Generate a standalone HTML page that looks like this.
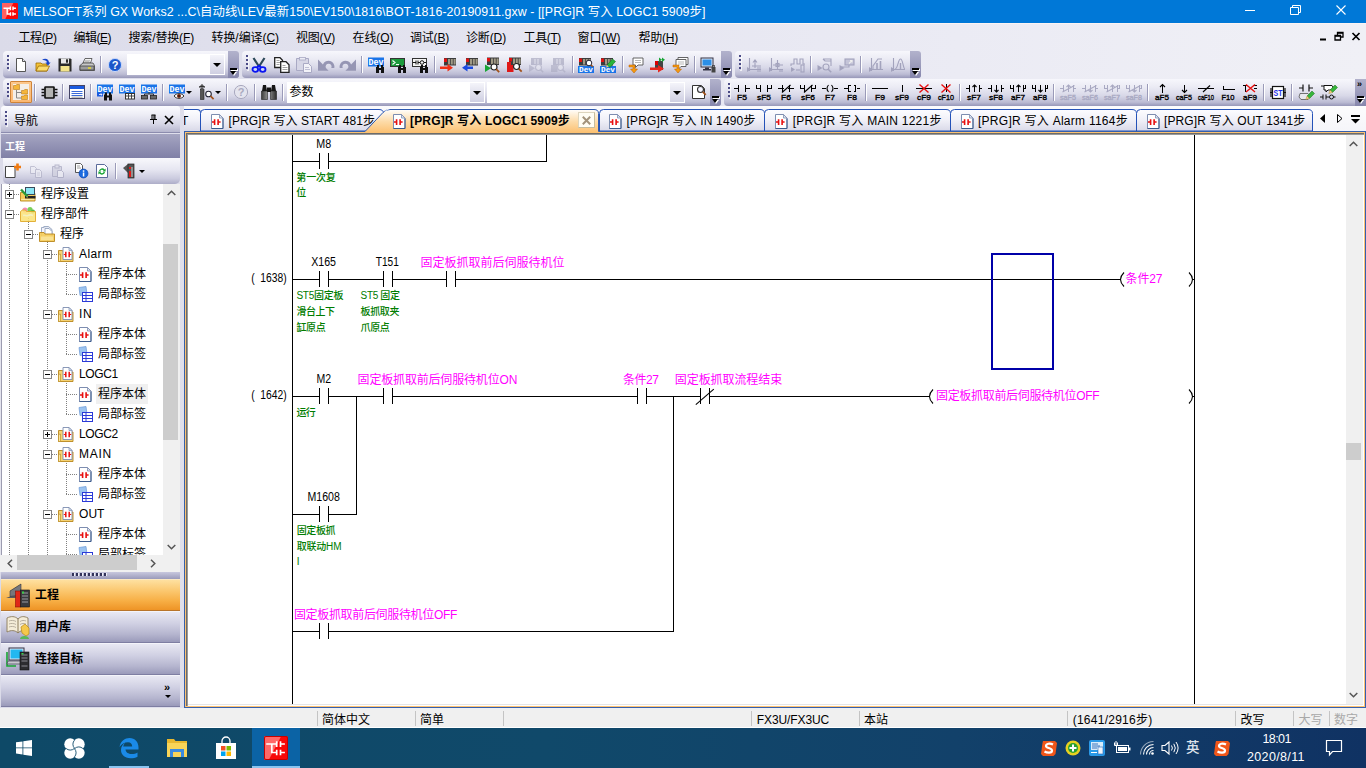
<!DOCTYPE html>
<html lang="zh-CN">
<head>
<meta charset="utf-8">
<title>MELSOFT GX Works2</title>
<style>
*{box-sizing:border-box;margin:0;padding:0}
html,body{width:1366px;height:768px;overflow:hidden;background:linear-gradient(90deg,#dbdbe9 0%,#e4e4f0 35%,#ebebf4 70%,#f0f0f6 100%);font-family:"Liberation Sans","Noto Sans CJK SC",sans-serif;font-size:12px;color:#000}
.abs{position:absolute}
#title{position:absolute;left:0;top:0;width:1366px;height:23px;background:#0078d7;color:#fff}
#title .txt{position:absolute;left:23px;top:0;height:23px;line-height:24px;font-size:12.4px;white-space:nowrap}
#menu{position:absolute;left:0;top:23px;width:1366px;height:28px;border-top:1px solid #fbf3f3}
#menu span{position:absolute;top:0px;height:27px;line-height:28px;font-size:12px;white-space:nowrap}
.tbar{position:absolute;height:27px;border-radius:4px 3px 3px 4px;background:linear-gradient(#f7f7fc 0%,#ebebf4 30%,#d8d8e8 62%,#bcbcd4 86%,#a4a4c2 95%,#9898b8 100%)}
.grip{position:absolute;left:4px;top:4px;width:2px;height:15px;background:repeating-linear-gradient(#4a4a86 0 2px,transparent 2px 4px);box-shadow:1px 1px 0 rgba(255,255,255,.7)}
.tbend{position:absolute;right:0;top:0;width:11px;height:27px;background:linear-gradient(#b2b2cc,#9c9cbc 50%,#8686ac);border-radius:0 3px 3px 0}
.sep{position:absolute;top:5px;width:2px;height:17px;border-left:1px solid #9a9ab8;border-right:1px solid #fff}
.combo{position:absolute;background:#fff;height:21px;top:3px}
.combo .arr{position:absolute;right:1px;top:1px;width:14px;height:19px;background:linear-gradient(#f4f4fa,#cfcfe2)}
.combo .arr:after{content:"";position:absolute;left:3px;top:8px;border:4px solid transparent;border-top:4px solid #000;border-bottom:0}
#status{position:absolute;left:0;top:708px;width:1366px;height:20px;background:#f0f0f0;font-size:12px;border-bottom:1px solid #fff}
#status span{position:absolute;top:3px;height:18px;line-height:18px;white-space:nowrap}
#status i{position:absolute;top:3px;width:1px;height:15px;background:#c4c4c4}
#taskbar{position:absolute;left:0;top:728px;width:1366px;height:40px;background:linear-gradient(90deg,#0e4967 0%,#10496a 40%,#12416a 70%,#103263 100%)}

.ic{position:absolute;width:16px;height:17px;line-height:0}
.ic svg{display:block;overflow:visible}
.dd{position:absolute;top:12px;width:0;height:0;border-style:solid;border-width:3px 3px 0 3px;border-color:#000 transparent transparent transparent}
.hot{position:absolute;background:linear-gradient(#fdc88c,#fbb872);border:1px solid #d08438;border-radius:1px}
.combo span{position:absolute;left:2.5px;top:0;line-height:21.500px;font-size:12px}
.tbend:after{content:"";position:absolute;left:2px;top:17px;width:7px;height:2px;background:#000;box-shadow:1px 1px 0 #fff}
.tbend:before{content:"";position:absolute;left:2px;top:20px;border:3.5px solid transparent;border-top:4px solid #000;border-bottom:0;filter:drop-shadow(1px 1px 0 #fff)}
.chev{position:absolute;left:2px;top:-1px;font-size:9px;line-height:12px;font-weight:bold}
#navhdr{position:absolute;left:1px;top:106px;width:179px;height:27px;background:linear-gradient(#fcfcff,#ececf5 35%,#d6d6e6 70%,#b6b6ce);border-radius:3px 3px 0 0;border-bottom:1px solid #8c8cae}
#navhdr span{position:absolute;left:13px;top:1px;line-height:28px;font-size:12px}
#prjhdr{position:absolute;left:1px;top:134px;width:179px;height:24px;background:linear-gradient(#a6a6c2,#9292b4 50%,#8080a6);color:#fff;font-weight:bold;font-size:10px;line-height:25px;padding-left:4px}
#prjtb{position:absolute;left:3px;top:158px;width:177px;height:26px;background:linear-gradient(#f8f8fc,#e6e6f1 45%,#cacade 80%,#adadc8);border-radius:0 0 5px 5px}
#tree{position:absolute;left:0;top:184px;width:163px;height:371px;background:#fff;overflow:hidden;background:linear-gradient(90deg,#e4e4ee 0 1px,#9c9cb0 1px 2px,#fff 2px)}
.bx{position:absolute;width:9px;height:9px;border:1px solid #848484;background:#fff}
.bx .h{position:absolute;left:1px;top:3px;width:5px;height:1px;background:#000}
.bx .v{position:absolute;left:3px;top:1px;width:1px;height:5px;background:#000}
.vl{position:absolute;width:1px;background:repeating-linear-gradient(#808080 0 1px,transparent 1px 2px)}
.hl{position:absolute;height:1px;background:repeating-linear-gradient(90deg,#808080 0 1px,transparent 1px 2px)}
.tl{position:absolute;height:20px;line-height:21px;font-size:12px;padding:0 2px;white-space:nowrap}
.tl.sel{background:#f0f0f0}
#vsb{position:absolute;left:163px;top:184px;width:17px;height:371px;background:#f0f0f0}
#vsb .thumb{position:absolute;left:0;top:60px;width:15px;height:196px;background:#cdcdcd}
#hsb{position:absolute;left:0;top:555px;width:180px;height:17px;background:#f0f0f0}
#hsb .thumb{position:absolute;left:17px;top:0;width:120px;height:15px;background:#cdcdcd}
#split{position:absolute;left:1px;top:572px;width:179px;height:7px;background:linear-gradient(#c8c8de,#9a9aba)}
#split div{position:absolute;left:71px;top:1px;width:36px;height:3px;background:repeating-linear-gradient(90deg,#33335a 0 2px,#f0f0f8 2px 3px,transparent 3px 4px)}
.nbtn{position:absolute;left:1px;width:179px;height:32px;background:linear-gradient(#e8e8f3,#cfcfe2 40%,#b4b4ce 75%,#9a9aba);border-top:1px solid #f4f4fa;border-bottom:1px solid #7e7ea2}
.nbtn.act{background:linear-gradient(#fee0a0,#fbc870 35%,#f7ae44 70%,#ee9426);border-top:1px solid #fbe8c0;border-bottom:1px solid #b8742a}
.nbtn span{position:absolute;left:34px;top:0;line-height:30px;font-size:12px;font-weight:bold}
.chev2{position:absolute;left:163px;top:5px;font-size:11px;line-height:12px;font-weight:bold}
.tt{position:absolute;top:109px;height:24px;line-height:24px;font-size:12px;white-space:nowrap}
.tt.b{font-weight:bold}
#edframe{position:absolute;left:184px;top:131px;width:1182px;height:577px;background:#fff;border:1px solid #3560ae;box-shadow:inset 0 0 0 1px #fdc272,inset 2px 2px 0 0 #6c6c6c,inset 3px 3px 0 0 #9a9a9a,inset -2px -2px 0 0 #fff,inset -3px -3px 0 0 #fff}
#evsb{position:absolute;left:1346px;top:135px;width:17px;height:569px;background:#f0f0f0}
#evsb .thumb{position:absolute;left:0;top:308px;width:15px;height:17px;background:#cdcdcd}
text.dv{font-family:"Liberation Sans",sans-serif;font-size:12px;fill:#000}
text.lb{font-family:"Liberation Sans","Noto Sans CJK SC",sans-serif;font-size:12px;fill:#f0f}
text.cm{font-family:"Liberation Sans","Noto Sans CJK SC",sans-serif;font-size:10px;font-weight:500;fill:#007c00}
text.st{font-family:"Liberation Sans",sans-serif;font-size:12px;fill:#000;white-space:pre}
</style>
</head>
<body>
<div id="title"><svg class="abs" style="left:2px;top:3px" width="16" height="16" viewBox="0 0 24 24"><rect width="24" height="24" rx="1.5" fill="#f80808"/><path d="M0 0H17L5 24H0z" fill="#ff6060"/><path d="M2.2 8H12.700M12.7 5.200v5.700M16.5 5.200v5.700M16.5 8h4.400M7.8 8v8.500h4.900M12.7 13.700v5.600M16.5 13.700v5.600M16.5 16.500h4.4" stroke="#fff" stroke-width="2.2" fill="none"/></svg><div class="txt" style="letter-spacing:0.041px">MELSOFT系列 GX Works2 ...C\自动线\LEV最新150\EV150\1816\BOT-1816-20190911.gxw - [[PRG]R 写入 LOGC1 5909步]</div><svg class="abs" style="left:1236px;top:0" width="130" height="23" viewBox="0 0 130 23"><g stroke="#fff" stroke-width="1" fill="none"><path d="M9 10.500h10"/><path d="M54.5 7.500h8v7h-8zM56.5 7.500v-2h8v7h-2"/><path d="M100.5 5.500l9 9M109.5 5.500l-9 9" stroke-width="1.1"/></g></svg></div>
<div id="menu">
<svg class="abs" style="left:1316px;top:7px" width="48" height="12" viewBox="0 0 48 12"><g stroke="#000" fill="none"><path d="M4 8.500h6" stroke-width="2"/><path d="M19 4.500h5.500v4.500h-5.500zM21.5 4v-2.500h5.500v4.500h-2" stroke-width="1.3"/><path d="M19 4.800h5.500M21.5 1.800h5.5" stroke-width="1.8"/><path d="M36.5 2l7 7M43.5 2l-7 7" stroke-width="1.7"/></g></svg>
<span style="letter-spacing:-0.403px;left:18.5px">工程(<u>P</u>)</span>
<span style="letter-spacing:-0.503px;left:73.5px">编辑(<u>E</u>)</span>
<span style="letter-spacing:-0.148px;left:128.5px">搜索/替换(<u>F</u>)</span>
<span style="letter-spacing:-0.064px;left:211.5px">转换/编译(<u>C</u>)</span>
<span style="letter-spacing:-0.203px;left:296px">视图(<u>V</u>)</span>
<span style="letter-spacing:-0.069px;left:352.5px">在线(<u>O</u>)</span>
<span style="letter-spacing:-0.203px;left:410px">调试(<u>B</u>)</span>
<span style="letter-spacing:-0.134px;left:466px">诊断(<u>D</u>)</span>
<span style="letter-spacing:-0.369px;left:523.5px">工具(<u>T</u>)</span>
<span style="letter-spacing:-0.066px;left:577.5px">窗口(<u>W</u>)</span>
<span style="letter-spacing:-0.234px;left:638.5px">帮助(<u>H</u>)</span>
</div>
<div class="tbar" style="left:3px;top:51px;width:236px"><div class="grip"></div><div class="ic" style="left:10px;top:6px"><svg width="16" height="16" viewBox="0 0 16 16" ><path d="M3.5 1.5h6l3 3v10h-9z" fill="#fff" stroke="#555" stroke-width="1"/><path d="M9.5 1.5v3h3" fill="#e8e8f0" stroke="#555"/></svg></div><div class="ic" style="left:32px;top:6px"><svg width="16" height="16" viewBox="0 0 16 16" ><path d="M1 6h5l1 1h5v7H1z" fill="#f5c33a" stroke="#9a6a00" stroke-width=".8"/><path d="M1 14l2.5-5h11L12 14z" fill="#fbdc6e" stroke="#9a6a00" stroke-width=".8"/><path d="M7 3c3-2.5 7-1 7 2.5h1.6L13 8.6 10.4 5.5H12C12 3.5 9.5 2.6 7 3z" fill="#1845c8"/></svg></div><div class="ic" style="left:54px;top:6px"><svg width="16" height="16" viewBox="0 0 16 16" ><path d="M1.5 1.5h12l1 1v12h-13z" fill="#2a2a2a"/><rect x="4" y="1.5" width="8" height="5" fill="#e9e9e9"/><rect x="9" y="2.3" width="2" height="3.4" fill="#2a2a2a"/><rect x="3.5" y="9" width="9" height="5.5" fill="#f2e38a"/></svg></div><div class="ic" style="left:76px;top:6px"><svg width="16" height="16" viewBox="0 0 16 16" ><path d="M4 6l2-4.5h7L11.5 6z" fill="#fff" stroke="#444" stroke-width=".8"/><path d="M1 8.5l3-2.5h10l1.5 2.5v5H1z" fill="#c9c9c9" stroke="#444" stroke-width=".8"/><rect x="1" y="9" width="14" height="4" fill="#9c9c9c" stroke="#444" stroke-width=".8"/><rect x="9" y="10.3" width="3" height="1.4" fill="#f0e020"/><path d="M6 3.3h5M5.6 4.6h5" stroke="#888" stroke-width=".6"/></svg></div><div class="sep" style="left:97px"></div><div class="ic" style="left:104px;top:6px"><svg width="16" height="16" viewBox="0 0 16 16" ><circle cx="8" cy="8" r="6.6" fill="#2f6fe0" stroke="#c9d6f5" stroke-width="1"/><circle cx="8" cy="8" r="5.4" fill="#1c55c8"/><text x="8" y="12" font-size="11" font-weight="bold" fill="#fff" text-anchor="middle" font-family="Liberation Sans,sans-serif">?</text></svg></div><div class="combo" style="left:124px;width:98px"><div class="arr"></div></div><div class="tbend"></div></div>
<div class="tbar" style="left:242px;top:51px;width:490px"><div class="grip"></div><div class="ic" style="left:9px;top:6px"><svg width="16" height="16" viewBox="0 0 16 16" ><path d="M2.5 1l5.5 8.500M13.5 1L8 9.5" stroke="#2c4858" stroke-width="2.2" fill="none"/><ellipse cx="4.3" cy="12.5" rx="2.8" ry="2.3" fill="#cfd6f8" stroke="#0a14f0" stroke-width="1.8"/><ellipse cx="11.7" cy="12.5" rx="2.8" ry="2.3" fill="#cfd6f8" stroke="#0a14f0" stroke-width="1.8"/><path d="M8 8.500l-2 2M8 8.500l2 2" stroke="#0a14f0" stroke-width="2"/></svg></div><div class="ic" style="left:32px;top:6px"><svg width="16" height="16" viewBox="0 0 16 16" ><path d="M0.7 0.700h5.300l2.5 2.500v7.300h-7.800z" fill="#fff" stroke="#222" stroke-width="1.3"/><path d="M6.7 4.700h5.300l3 3v7.600h-8.300z" fill="#fff" stroke="#222" stroke-width="1.3"/><path d="M2.5 3.500h3M2.5 5.500h3.500M2.5 7.500h3M8.5 8.500h3M8.5 10.500h5M8.5 12.500h5" stroke="#8a8a8a" stroke-width=".8"/></svg></div><div class="ic" style="left:54px;top:6px"><svg width="16" height="16" viewBox="0 0 16 16" ><path d="M0.5 1.500h12v12h-12z" fill="#d6d6e6" stroke="#a9a9c4" stroke-width="1"/><rect x="3.5" y="0.5" width="6" height="2.5" fill="#ececf4" stroke="#a9a9c4" stroke-width=".8"/><path d="M7.5 6.500h5l3 3v6h-8z" fill="#f2f2f8" stroke="#a9a9c4" stroke-width="1"/><path d="M9 10.500h4M9 12.500h5" stroke="#b9b9d0" stroke-width=".9"/></svg></div><div class="ic" style="left:76px;top:6px"><svg width="16" height="16" viewBox="0 0 16 16" ><path d="M0 2.500V13.700H10.600L7.9 11A3 3 0 1 1 13.3 11H16.300A6 6 0 0 0 4.9 7.400Z" fill="#9696b4"/></svg></div><div class="ic" style="left:98px;top:6px"><svg width="16" height="16" viewBox="0 0 16 16" ><path d="M0 2.500V13.700H10.600L7.9 11A3 3 0 1 1 13.3 11H16.300A6 6 0 0 0 4.9 7.400Z" fill="#9696b4" transform="translate(16,0) scale(-1,1)"/></svg></div><div class="sep" style="left:119px"></div><div class="ic" style="left:126px;top:6px"><svg width="16" height="16" viewBox="0 0 16 16" ><rect x="0" y="0.5" width="16" height="9" fill="#1a74e8"/><text x="8" y="8" font-size="9" font-weight="bold" fill="#fff" text-anchor="middle" font-family="Liberation Mono,monospace" textLength="15" lengthAdjust="spacingAndGlyphs">Dev</text><path d="M8 10h3v6h-3zM13 10h3v6h-3zM9 8h2v2h-2zM13 8h2v2h-2zM11 11h2v2h-2z" fill="#111"/></svg></div><div class="ic" style="left:148px;top:6px"><svg width="16" height="16" viewBox="0 0 16 16" ><rect x="0.5" y="1.5" width="14" height="8" fill="#1c9a3c" stroke="#333"/><path d="M2.5 3.500l2.5 2-2.5 2M6 7.500h3" stroke="#fff" stroke-width="1.1" fill="none"/><path d="M8 10h3v6h-3zM13 10h3v6h-3zM9 8h2v2h-2zM13 8h2v2h-2zM11 11h2v2h-2z" fill="#111"/></svg></div><div class="ic" style="left:170px;top:6px"><svg width="16" height="16" viewBox="0 0 16 16" ><rect x="0.5" y="1.5" width="14" height="8" fill="#f4f4f4" stroke="#333"/><path d="M1 5.500h3M4 3.500v4M6 3.500v4M6 5.500h2M12 5.500h2" stroke="#111" stroke-width="1"/><circle cx="10" cy="5.5" r="1.8" fill="none" stroke="#111"/><path d="M8 10h3v6h-3zM13 10h3v6h-3zM9 8h2v2h-2zM13 8h2v2h-2zM11 11h2v2h-2z" fill="#111"/></svg></div><div class="sep" style="left:192px"></div><div class="ic" style="left:198px;top:6px"><svg width="16" height="16" viewBox="0 0 16 16" ><g opacity="1"><rect x="4" y="1" width="12" height="7.5" fill="#3c3c3c"/><rect x="4" y="1.5" width="3" height="3.5" fill="#e01010"/><rect x="8" y="2" width="2" height="5.5" fill="#a09a86"/><rect x="10.8" y="2" width="2" height="5.5" fill="#a09a86"/><rect x="13.6" y="2" width="2" height="5.5" fill="#a09a86"/></g><path d="M0 9.500h7.500V7L13 10.8 7.5 14.600V12H0z" fill="#f03018"/></svg></div><div class="ic" style="left:220px;top:6px"><svg width="16" height="16" viewBox="0 0 16 16" ><g opacity="1"><rect x="4" y="1" width="12" height="7.5" fill="#3c3c3c"/><rect x="4" y="1.5" width="3" height="3.5" fill="#e01010"/><rect x="8" y="2" width="2" height="5.5" fill="#a09a86"/><rect x="10.8" y="2" width="2" height="5.5" fill="#a09a86"/><rect x="13.6" y="2" width="2" height="5.5" fill="#a09a86"/></g><path d="M11 9.500H5.500V7L0 10.8 5.5 14.600V12H11z" fill="#1a4ae0"/></svg></div><div class="ic" style="left:242px;top:6px"><svg width="16" height="16" viewBox="0 0 16 16" ><g opacity="1"><rect x="3" y="0.5" width="12" height="7.5" fill="#3c3c3c"/><rect x="3" y="1.0" width="3" height="3.5" fill="#e01010"/><rect x="7" y="1.5" width="2" height="5.5" fill="#a09a86"/><rect x="9.8" y="1.5" width="2" height="5.5" fill="#a09a86"/><rect x="12.6" y="1.5" width="2" height="5.5" fill="#a09a86"/></g><path d="M1 7.500l6 3.7-6 3.800z" fill="#18a534"/><circle cx="10" cy="10" r="3" fill="#fff" stroke="#222" stroke-width="1.2"/><path d="M12.2 12.2l3 3" stroke="#a0501a" stroke-width="1.8"/></svg></div><div class="ic" style="left:264px;top:6px"><svg width="16" height="16" viewBox="0 0 16 16" ><g opacity="1"><rect x="3" y="0.5" width="12" height="7.5" fill="#3c3c3c"/><rect x="3" y="1.0" width="3" height="3.5" fill="#e01010"/><rect x="7" y="1.5" width="2" height="5.5" fill="#a09a86"/><rect x="9.8" y="1.5" width="2" height="5.5" fill="#a09a86"/><rect x="12.6" y="1.5" width="2" height="5.5" fill="#a09a86"/></g><rect x="1" y="8" width="6.5" height="7" fill="#e01818"/><rect x="1" y="5" width="4" height="3" fill="#e01818"/><circle cx="10.5" cy="9.5" r="3" fill="#fff" stroke="#222" stroke-width="1.2"/><path d="M12.7 11.7l3 3" stroke="#a0501a" stroke-width="1.8"/></svg></div><div class="ic" style="left:286px;top:6px"><svg width="16" height="16" viewBox="0 0 16 16" ><g opacity=".55"><rect x="3" y="1" width="11" height="7" fill="#9a9ab4"/><path d="M7 2v5M10 2v5" stroke="#e0e0ec"/><path d="M1 7.500l6 3.7-6 3.800z" fill="#a6a6bd"/><circle cx="10.5" cy="10.5" r="3" fill="#e8e8f0" stroke="#a6a6bd" stroke-width="1.2"/><path d="M12.7 12.700l2.5 2.5" stroke="#a6a6bd" stroke-width="1.6"/></g></svg></div><div class="ic" style="left:308px;top:6px"><svg width="16" height="16" viewBox="0 0 16 16" ><g opacity=".55"><rect x="3" y="1" width="11" height="7" fill="#9a9ab4"/><path d="M7 2v5M10 2v5" stroke="#e0e0ec"/><rect x="1" y="8" width="6.5" height="7" fill="#a6a6bd"/><circle cx="10.5" cy="10.5" r="3" fill="#e8e8f0" stroke="#a6a6bd" stroke-width="1.2"/><path d="M12.7 12.700l2.5 2.5" stroke="#a6a6bd" stroke-width="1.6"/></g></svg></div><div class="sep" style="left:330px"></div><div class="ic" style="left:336px;top:6px"><svg width="16" height="16" viewBox="0 0 16 16" ><rect x="0" y="9" width="16" height="7" fill="#1a74e8"/><text x="8" y="15.3" font-size="7.5" font-weight="bold" fill="#fff" text-anchor="middle" font-family="Liberation Mono,monospace" textLength="14" lengthAdjust="spacingAndGlyphs">Dev</text><g opacity="1"><rect x="1" y="1" width="12" height="7.5" fill="#3c3c3c"/><rect x="1" y="1.5" width="3" height="3.5" fill="#e01010"/><rect x="5" y="2" width="2" height="5.5" fill="#a09a86"/><rect x="7.8" y="2" width="2" height="5.5" fill="#a09a86"/><rect x="10.6" y="2" width="2" height="5.5" fill="#a09a86"/></g><circle cx="11" cy="6" r="2.8" fill="#fff" stroke="#223" stroke-width="1"/><path d="M13 8l1.8 1.8" stroke="#a0501a" stroke-width="1.6"/></svg></div><div class="ic" style="left:358px;top:6px"><svg width="16" height="16" viewBox="0 0 16 16" ><rect x="0" y="9" width="16" height="7" fill="#1a74e8"/><text x="8" y="15.3" font-size="7.5" font-weight="bold" fill="#fff" text-anchor="middle" font-family="Liberation Mono,monospace" textLength="14" lengthAdjust="spacingAndGlyphs">Dev</text><g opacity="1"><rect x="1" y="1" width="12" height="7.5" fill="#3c3c3c"/><rect x="1" y="1.5" width="3" height="3.5" fill="#e01010"/><rect x="5" y="2" width="2" height="5.5" fill="#a09a86"/><rect x="7.8" y="2" width="2" height="5.5" fill="#a09a86"/><rect x="10.6" y="2" width="2" height="5.5" fill="#a09a86"/></g><path d="M7 8l5.5-6 3 2.5-5.5 6z" fill="#27b43a" stroke="#156a20" stroke-width=".6"/><path d="M7 8l-1 2.6 2.8-.800z" fill="#f0d080"/></svg></div><div class="sep" style="left:380px"></div><div class="ic" style="left:386px;top:6px"><svg width="16" height="16" viewBox="0 0 16 16" ><path d="M5 1h10v7h-5l-2.5 2.500V8H5z" fill="#fff" stroke="#555" stroke-width=".9"/><path d="M7 3.5h6M7 5.5h6" stroke="#999" stroke-width=".7"/><path d="M1 8h6v4h2.500L6 16 2.5 12H5V10H1z" fill="#f59a10" stroke="#b85c00" stroke-width=".5"/></svg></div><div class="ic" style="left:408px;top:6px"><svg width="16" height="16" viewBox="0 0 16 16" ><rect x="5" y="4" width="8" height="9" fill="#444"/><rect x="5" y="4" width="3" height="4" fill="#d00"/><path d="M9 0.500l3 2.2-3 2.200zM12 0.500l3 2.2-3 2.200z" fill="#18a534"/><path d="M0 10.500h8V8l6 3.8-6 3.800v-2.500H0z" fill="#e8261c"/></svg></div><div class="ic" style="left:430px;top:6px"><svg width="16" height="16" viewBox="0 0 16 16" ><path d="M6 0.5h10v7h-5l-2.5 2.500V7.5H6z" fill="#fff" stroke="#555" stroke-width=".9"/><path d="M8 3.0h6M8 5.0h6" stroke="#999" stroke-width=".7"/><path d="M4 2.5h10v7h-5l-2.5 2.500V9.5H4z" fill="#fff" stroke="#555" stroke-width=".9"/><path d="M6 5.0h6M6 7.0h6" stroke="#999" stroke-width=".7"/><path d="M1 8h6v4h2.500L6 16 2.5 12H5V10H1z" fill="#f59a10" stroke="#b85c00" stroke-width=".5"/></svg></div><div class="sep" style="left:452px"></div><div class="ic" style="left:458px;top:6px"><svg width="16" height="16" viewBox="0 0 16 16" ><rect x="1" y="1" width="12" height="9" fill="#dfe8f8" stroke="#334" stroke-width="1"/><rect x="2.5" y="2.5" width="9" height="6" fill="#2b8fe8"/><rect x="5" y="10.5" width="4" height="1.5" fill="#334"/><rect x="3" y="12" width="8" height="1.5" fill="#334"/><rect x="11.5" y="10" width="4" height="5.5" fill="#444"/><rect x="12.5" y="8.5" width="2" height="2" fill="none" stroke="#444" stroke-width=".8"/></svg></div><div class="tbend"></div></div>
<div class="tbar" style="left:735px;top:51px;width:186px"><div class="grip"></div><div class="ic" style="left:11px;top:6px"><svg width="16" height="16" viewBox="0 0 16 16" ><g fill="none" stroke="#a3a3bd" stroke-width="1.1"><path d="M3.5 1v13M1 12.500h14M6 9h9M9 3v8M7 5.500l2-2.5 2 2.5"/><path d="M1 10l4 2.5-4 2.500z" fill="#a3a3bd" stroke="none"/><path d="M11 11h4M11 14h4"/></g></svg></div><div class="ic" style="left:33px;top:6px"><svg width="16" height="16" viewBox="0 0 16 16" ><g fill="none" stroke="#a3a3bd" stroke-width="1.1"><path d="M3.5 1v13M1 12.500h14M5 8h10M9.5 3v10"/><rect x="8" y="6.5" width="3" height="3"/><path d="M1 10l4 2.5-4 2.500z" fill="#a3a3bd" stroke="none"/><path d="M11 14h4"/></g></svg></div><div class="ic" style="left:55px;top:6px"><svg width="16" height="16" viewBox="0 0 16 16" ><g fill="none" stroke="#a3a3bd" stroke-width="1.1"><path d="M1 9V7h3V2h3v5h3V2h3v5h2"/><rect x="11" y="8" width="3" height="7"/><path d="M1 10l4 2.5-4 2.500z" fill="#a3a3bd" stroke="none"/><path d="M6 13h4"/></g></svg></div><div class="sep" style="left:75px"></div><div class="ic" style="left:82px;top:6px"><svg width="16" height="16" viewBox="0 0 16 16" ><g fill="none" stroke="#a3a3bd" stroke-width="1.1"><path d="M6 2h8v7M6 2l2 2h6" /><circle cx="9" cy="10" r="3"/><path d="M11.2 12.200l3 3" stroke-width="1.6"/><path d="M0.5 8l5 3-5 3z" fill="#a3a3bd" stroke="none"/></g></svg></div><div class="ic" style="left:104px;top:6px"><svg width="16" height="16" viewBox="0 0 16 16" ><g fill="none" stroke="#a3a3bd" stroke-width="1.1"><rect x="6" y="2" width="9" height="6" fill="#c4c4d8"/><path d="M10 6.500l3-3M11 3.500h2v2" stroke="#eee"/><path d="M3 10h7v-2"/><path d="M0.5 8l5 3-5 3z" fill="#a3a3bd" stroke="none"/></g></svg></div><div class="sep" style="left:125px"></div><div class="ic" style="left:133px;top:6px"><svg width="16" height="16" viewBox="0 0 16 16" ><g fill="none" stroke="#a3a3bd" stroke-width="1.1"><path d="M3.5 1v13M1 12.500h14M5 12V9l5-7h4"/><path d="M9 6v6M12.5 4v8" stroke-width="1.6"/><path d="M1 10l4 2.5-4 2.500z" fill="#a3a3bd" stroke="none"/></g></svg></div><div class="ic" style="left:155px;top:6px"><svg width="16" height="16" viewBox="0 0 16 16" ><g fill="none" stroke="#a3a3bd" stroke-width="1.1"><path d="M3.5 1v13M1 12.500h14M5 12c3 0 3-10 5.5-10s2.5 10 4.5 10"/><path d="M10.5 6v6" stroke-width="1.4"/><path d="M1 10l4 2.5-4 2.500z" fill="#a3a3bd" stroke="none"/></g></svg></div><div class="tbend"></div></div>
<div class="tbar" style="left:3px;top:79px;width:718px"><div class="grip"></div><div class="hot" style="left:7px;top:2px;width:22px;height:22px"></div><div class="ic" style="left:10px;top:5px"><svg width="16" height="16" viewBox="0 0 16 16" ><rect x="0" y="0" width="16" height="16" fill="#f4efe8"/><path d="M0.5 1.5h2.4000000000000004l.8-1h2.8v5h-6z" fill="#f5b63a" stroke="#b06a00" stroke-width=".5"/><path d="M8.5 6.5h2.4000000000000004l.8-1h2.8v4.5h-6z" fill="#f5b63a" stroke="#b06a00" stroke-width=".5"/><path d="M8.5 12h2.4000000000000004l.8-1h2.8v4.5h-6z" fill="#f5b63a" stroke="#b06a00" stroke-width=".5"/><path d="M3.5 6v8h5M3.5 8.500h5" fill="none" stroke="#8a8a8a" stroke-width="1"/></svg></div><div class="sep" style="left:31px"></div><div class="ic" style="left:38px;top:5px"><svg width="16" height="16" viewBox="0 0 16 16" ><rect x="4" y="3" width="9" height="11" rx=".5" fill="#b4b4b4" stroke="#111" stroke-width="1.7"/><path d="M0.5 5.500h3M0.5 8.500h3M0.5 11.500h3M13.5 5.500h3M13.5 8.500h3M13.5 11.500h3" stroke="#111" stroke-width="1.7"/></svg></div><div class="sep" style="left:59px"></div><div class="ic" style="left:66px;top:5px"><svg width="16" height="16" viewBox="0 0 16 16" ><rect x="0.5" y="1.5" width="15" height="13" fill="#fff" stroke="#446"/><rect x="1" y="2" width="14" height="3" fill="#1a5ae0"/><path d="M2.5 7.500h11M2.5 9.500h11M2.5 11.500h11" stroke="#3a6ad8" stroke-width="1"/><path d="M2.5 13.200h11" stroke="#888" stroke-width=".8"/></svg></div><div class="sep" style="left:87px"></div><div class="ic" style="left:94px;top:5px"><svg width="16" height="16" viewBox="0 0 16 16" ><rect x="0" y="0.5" width="16" height="9" fill="#1a74e8"/><text x="8" y="8" font-size="9" font-weight="bold" fill="#fff" text-anchor="middle" font-family="Liberation Mono,monospace" textLength="15" lengthAdjust="spacingAndGlyphs">Dev</text><rect x="0" y="8.5" width="6" height="4" fill="#1a5ae0"/><path d="M2 10.500h3l-1.2-1.200M5 10.500l-1.2 1.2" stroke="#fff" stroke-width=".8" fill="none"/><path d="M7 10.5h3v6h-3zM12 10.5h3v6h-3zM8 8.5h2v2h-2zM12 8.5h2v2h-2zM10 11.5h2v2h-2z" fill="#111"/></svg></div><div class="ic" style="left:116px;top:5px"><svg width="16" height="16" viewBox="0 0 16 16" ><rect x="0" y="0.5" width="16" height="9" fill="#1a74e8"/><text x="8" y="8" font-size="9" font-weight="bold" fill="#fff" text-anchor="middle" font-family="Liberation Mono,monospace" textLength="15" lengthAdjust="spacingAndGlyphs">Dev</text><rect x="6.5" y="9.5" width="9" height="5.5" fill="#fff" stroke="#333" stroke-width="1"/><path d="M6.5 12h9M9.5 9.500v5.500M12.5 9.500v5.5" stroke="#333" stroke-width=".9"/></svg></div><div class="ic" style="left:138px;top:5px"><svg width="16" height="16" viewBox="0 0 16 16" ><rect x="0" y="0.5" width="16" height="9" fill="#1a74e8"/><text x="8" y="8" font-size="9" font-weight="bold" fill="#fff" text-anchor="middle" font-family="Liberation Mono,monospace" textLength="15" lengthAdjust="spacingAndGlyphs">Dev</text><path d="M8 8v2M3.5 12v-2h9v2" fill="none" stroke="#333"/><rect x="0.5" y="11.5" width="6" height="3.5" fill="#666" stroke="#222" stroke-width=".8"/><rect x="9.5" y="11.5" width="6" height="3.5" fill="#666" stroke="#222" stroke-width=".8"/></svg></div><div class="sep" style="left:159px"></div><div class="ic" style="left:166px;top:5px"><svg width="16" height="16" viewBox="0 0 16 16" ><rect x="0" y="0.5" width="16" height="9" fill="#1a74e8"/><text x="8" y="8" font-size="9" font-weight="bold" fill="#fff" text-anchor="middle" font-family="Liberation Mono,monospace" textLength="15" lengthAdjust="spacingAndGlyphs">Dev</text><path d="M5 12c2.5-3.2 7.5-3.2 10 0-2.5 3.2-7.5 3.2-10 0z" fill="#fff" stroke="#222" stroke-width=".9"/><circle cx="10" cy="12" r="2" fill="#7a2a10"/><circle cx="10" cy="12" r=".8" fill="#111"/></svg></div><div class="dd" style="left:183px"></div><div class="ic" style="left:195px;top:5px"><svg width="16" height="16" viewBox="0 0 16 16" ><path d="M4 0v5M1.5 2.500h5" stroke="#333" stroke-width="1"/><ellipse cx="4" cy="3" rx="2.6" ry="1.3" fill="none" stroke="#333" stroke-width=".8"/><rect x="2.5" y="5.5" width="3.5" height="10" fill="#555" stroke="#222" stroke-width=".6"/><circle cx="10.5" cy="10" r="2.8" fill="#fff" stroke="#223" stroke-width="1.1"/><path d="M12.6 12.200l3 3" stroke="#a0501a" stroke-width="1.7"/></svg></div><div class="dd" style="left:212px"></div><div class="sep" style="left:223px"></div><div class="ic" style="left:230px;top:5px"><svg width="16" height="16" viewBox="0 0 16 16" ><circle cx="8" cy="8" r="6.6" fill="#e4e4ee" stroke="#a9a9bf" stroke-width="1"/><text x="8" y="12" font-size="11" font-weight="bold" fill="#a9a9bf" text-anchor="middle" font-family="Liberation Sans,sans-serif">?</text></svg></div><div class="sep" style="left:251px"></div><div class="ic" style="left:258px;top:5px"><svg width="16" height="16" viewBox="0 0 16 16" ><defs><linearGradient id="bg1" x1="0" y1="0" x2="1" y2="0"><stop offset="0" stop-color="#3a3a3a"/><stop offset=".45" stop-color="#9a9a9a"/><stop offset="1" stop-color="#2a2a2a"/></linearGradient></defs><path d="M0.5 7h6v8.500h-6zM9.5 7h6v8.500h-6z" fill="url(#bg1)" stroke="#222" stroke-width=".6"/><path d="M2 1h3l1 6H1zM11 1h3l1 6h-5zM6 3.500h4v4.500h-4z" fill="#151515"/></svg></div><div class="sep" style="left:279px"></div><div class="combo" style="left:284px;width:198px"><span>参数</span><div class="arr"></div></div><div class="combo" style="left:484px;width:198px"><div class="arr"></div></div><div class="ic" style="left:688px;top:5px"><svg width="16" height="16" viewBox="0 0 16 16" ><path d="M1.5 1.500h9l3 3v10h-12z" fill="#fff" stroke="#333" stroke-width="1"/><circle cx="9.5" cy="5.5" r="3" fill="#f4f4ff" stroke="#333" stroke-width="1.1"/><path d="M11.8 7.800l3 3" stroke="#a0501a" stroke-width="1.7"/></svg></div><div class="tbend"></div></div>
<div class="tbar" style="left:724px;top:79px;width:642px;border-radius:4px 0 0 4px"><div class="grip"></div><div class="ic" style="left:10px;top:5px"><svg width="16" height="17" viewBox="0 0 16 17" ><path d="M0 4.500h4.500M4.5 1v7M11.5 1v7M11.5 4.500h4.5" stroke="#000" stroke-width="1" fill="none" shape-rendering="crispEdges"/><text x="8" y="16" font-size="8" fill="#000" stroke="#000" stroke-width=".35" text-anchor="middle" font-family="Liberation Sans,sans-serif" textLength="10" lengthAdjust="spacingAndGlyphs">F5</text></svg></div><div class="ic" style="left:32px;top:5px"><svg width="16" height="17" viewBox="0 0 16 17" ><path d="M0.5 1v3.500h4M4.5 1v7M11.5 1v7M11.5 4.500h4V1" stroke="#000" stroke-width="1" fill="none" shape-rendering="crispEdges"/><text x="8" y="16" font-size="8" fill="#000" stroke="#000" stroke-width=".35" text-anchor="middle" font-family="Liberation Sans,sans-serif" textLength="14" lengthAdjust="spacingAndGlyphs">sF5</text></svg></div><div class="ic" style="left:54px;top:5px"><svg width="16" height="17" viewBox="0 0 16 17" ><path d="M0 4.500h6M10 4.500h6M4.5 1v7M11.5 1v7" stroke="#000" stroke-width="1" fill="none" shape-rendering="crispEdges"/><path d="M4 8.500L12.5 1" stroke="#000" stroke-width="1.1" fill="none"/><text x="8" y="16" font-size="8" fill="#000" stroke="#000" stroke-width=".35" text-anchor="middle" font-family="Liberation Sans,sans-serif" textLength="10" lengthAdjust="spacingAndGlyphs">F6</text></svg></div><div class="ic" style="left:76px;top:5px"><svg width="16" height="17" viewBox="0 0 16 17" ><path d="M0.5 1v3.500h4M4.5 1v7M11.5 1v7M11.5 4.500h4V1" stroke="#000" stroke-width="1" fill="none" shape-rendering="crispEdges"/><path d="M4 8.500L12.5 1" stroke="#000" stroke-width="1.1" fill="none"/><text x="8" y="16" font-size="8" fill="#000" stroke="#000" stroke-width=".35" text-anchor="middle" font-family="Liberation Sans,sans-serif" textLength="14" lengthAdjust="spacingAndGlyphs">sF6</text></svg></div><div class="ic" style="left:98px;top:5px"><svg width="16" height="17" viewBox="0 0 16 17" ><path d="M0 4.500h4M12 4.500h4" stroke="#000" stroke-width="1" fill="none" shape-rendering="crispEdges"/><path d="M6.5 1Q3.5 4.5 6.5 8M9.5 1Q12.5 4.5 9.5 8" stroke="#000" stroke-width="1.1" fill="none"/><text x="8" y="16" font-size="8" fill="#000" stroke="#000" stroke-width=".35" text-anchor="middle" font-family="Liberation Sans,sans-serif" textLength="10" lengthAdjust="spacingAndGlyphs">F7</text></svg></div><div class="ic" style="left:120px;top:5px"><svg width="16" height="17" viewBox="0 0 16 17" ><path d="M0 4.500h3.500M6.5 1.500H4.500v6h2M9.5 1.500h2v6h-2M12.5 4.500h3.5" stroke="#000" stroke-width="1" fill="none" shape-rendering="crispEdges"/><text x="8" y="16" font-size="8" fill="#000" stroke="#000" stroke-width=".35" text-anchor="middle" font-family="Liberation Sans,sans-serif" textLength="10" lengthAdjust="spacingAndGlyphs">F8</text></svg></div><div class="sep" style="left:141px"></div><div class="ic" style="left:148px;top:5px"><svg width="16" height="17" viewBox="0 0 16 17" ><path d="M0 4.500h16" stroke="#000" stroke-width="1" fill="none" shape-rendering="crispEdges"/><text x="8" y="16" font-size="8" fill="#000" stroke="#000" stroke-width=".35" text-anchor="middle" font-family="Liberation Sans,sans-serif" textLength="10" lengthAdjust="spacingAndGlyphs">F9</text></svg></div><div class="ic" style="left:170px;top:5px"><svg width="16" height="17" viewBox="0 0 16 17" ><path d="M8.5 1v7" stroke="#000" stroke-width="1" fill="none" shape-rendering="crispEdges"/><text x="8" y="16" font-size="8" fill="#000" stroke="#000" stroke-width=".35" text-anchor="middle" font-family="Liberation Sans,sans-serif" textLength="14" lengthAdjust="spacingAndGlyphs">sF9</text></svg></div><div class="ic" style="left:192px;top:5px"><svg width="16" height="17" viewBox="0 0 16 17" ><path d="M0 4.500h16" stroke="#000" stroke-width="1" fill="none" shape-rendering="crispEdges"/><path d="M3.5 0.500l9 8M12.5 0.500l-9 8" stroke="#e81010" stroke-width="1.4" fill="none"/><text x="8" y="16" font-size="8" fill="#000" stroke="#000" stroke-width=".35" text-anchor="middle" font-family="Liberation Sans,sans-serif" textLength="14" lengthAdjust="spacingAndGlyphs">cF9</text></svg></div><div class="ic" style="left:214px;top:5px"><svg width="16" height="17" viewBox="0 0 16 17" ><path d="M8.5 0v8" stroke="#000" stroke-width="1" fill="none" shape-rendering="crispEdges"/><path d="M3.5 0.500l9 8M12.5 0.500l-9 8" stroke="#e81010" stroke-width="1.4" fill="none"/><text x="8" y="16" font-size="8" fill="#000" stroke="#000" stroke-width=".35" text-anchor="middle" font-family="Liberation Sans,sans-serif" textLength="16" lengthAdjust="spacingAndGlyphs">cF10</text></svg></div><div class="sep" style="left:235px"></div><div class="ic" style="left:242px;top:5px"><svg width="16" height="17" viewBox="0 0 16 17" ><path d="M0 4.500h3.500M3.5 1v7M13.5 1v7M13.5 4.500h2.500M8.5 1v7" stroke="#000" stroke-width="1" fill="none" shape-rendering="crispEdges"/><path d="M6.5 3l2-2 2 2" stroke="#000" stroke-width="1.1" fill="none"/><text x="8" y="16" font-size="8" fill="#000" stroke="#000" stroke-width=".35" text-anchor="middle" font-family="Liberation Sans,sans-serif" textLength="14" lengthAdjust="spacingAndGlyphs">sF7</text></svg></div><div class="ic" style="left:264px;top:5px"><svg width="16" height="17" viewBox="0 0 16 17" ><path d="M0 4.500h3.500M3.5 1v7M13.5 1v7M13.5 4.500h2.500M8.5 1v7" stroke="#000" stroke-width="1" fill="none" shape-rendering="crispEdges"/><path d="M6.5 6l2 2 2-2" stroke="#000" stroke-width="1.1" fill="none"/><text x="8" y="16" font-size="8" fill="#000" stroke="#000" stroke-width=".35" text-anchor="middle" font-family="Liberation Sans,sans-serif" textLength="14" lengthAdjust="spacingAndGlyphs">sF8</text></svg></div><div class="ic" style="left:286px;top:5px"><svg width="16" height="17" viewBox="0 0 16 17" ><path d="M0.5 1v3.500h3M3.5 1v7M13.5 1v7M13.5 4.500h2V1M8.5 1v7" stroke="#000" stroke-width="1" fill="none" shape-rendering="crispEdges"/><path d="M6.5 3l2-2 2 2" stroke="#000" stroke-width="1.1" fill="none"/><text x="8" y="16" font-size="8" fill="#000" stroke="#000" stroke-width=".35" text-anchor="middle" font-family="Liberation Sans,sans-serif" textLength="14" lengthAdjust="spacingAndGlyphs">aF7</text></svg></div><div class="ic" style="left:308px;top:5px"><svg width="16" height="17" viewBox="0 0 16 17" ><path d="M0.5 1v3.500h3M3.5 1v7M13.5 1v7M13.5 4.500h2V1M8.5 1v7" stroke="#000" stroke-width="1" fill="none" shape-rendering="crispEdges"/><path d="M6.5 6l2 2 2-2" stroke="#000" stroke-width="1.1" fill="none"/><text x="8" y="16" font-size="8" fill="#000" stroke="#000" stroke-width=".35" text-anchor="middle" font-family="Liberation Sans,sans-serif" textLength="14" lengthAdjust="spacingAndGlyphs">aF8</text></svg></div><div class="sep" style="left:329px"></div><div class="ic" style="left:336px;top:5px"><svg width="16" height="17" viewBox="0 0 16 17" ><path d="M0 4.500h3.500M3.5 1v7M13.5 1v7M13.5 4.500h2.500M8.5 1v7" stroke="#a9a9c2" stroke-width="1" fill="none" shape-rendering="crispEdges"/><path d="M2.5 8L14.5 1.500M6.5 3l2-2 2 2" stroke="#a9a9c2" stroke-width="1.1" fill="none"/><text x="8" y="16" font-size="7.5" fill="#a9a9c2" stroke="#a9a9c2" stroke-width=".35" text-anchor="middle" font-family="Liberation Sans,sans-serif" textLength="16" lengthAdjust="spacingAndGlyphs">saF5</text></svg></div><div class="ic" style="left:358px;top:5px"><svg width="16" height="17" viewBox="0 0 16 17" ><path d="M0 4.500h3.500M3.5 1v7M13.5 1v7M13.5 4.500h2.500M8.5 1v7" stroke="#a9a9c2" stroke-width="1" fill="none" shape-rendering="crispEdges"/><path d="M2.5 8L14.5 1.500M6.5 6l2 2 2-2" stroke="#a9a9c2" stroke-width="1.1" fill="none"/><text x="8" y="16" font-size="7.5" fill="#a9a9c2" stroke="#a9a9c2" stroke-width=".35" text-anchor="middle" font-family="Liberation Sans,sans-serif" textLength="16" lengthAdjust="spacingAndGlyphs">saF6</text></svg></div><div class="ic" style="left:380px;top:5px"><svg width="16" height="17" viewBox="0 0 16 17" ><path d="M0.5 1v3.500h3M3.5 1v7M13.5 1v7M13.5 4.500h2V1M8.5 1v7" stroke="#a9a9c2" stroke-width="1" fill="none" shape-rendering="crispEdges"/><path d="M2.5 8L14.5 1.500M6.5 3l2-2 2 2" stroke="#a9a9c2" stroke-width="1.1" fill="none"/><text x="8" y="16" font-size="7.5" fill="#a9a9c2" stroke="#a9a9c2" stroke-width=".35" text-anchor="middle" font-family="Liberation Sans,sans-serif" textLength="16" lengthAdjust="spacingAndGlyphs">saF7</text></svg></div><div class="ic" style="left:402px;top:5px"><svg width="16" height="17" viewBox="0 0 16 17" ><path d="M0.5 1v3.500h3M3.5 1v7M13.5 1v7M13.5 4.500h2V1M8.5 1v7" stroke="#a9a9c2" stroke-width="1" fill="none" shape-rendering="crispEdges"/><path d="M2.5 8L14.5 1.500M6.5 6l2 2 2-2" stroke="#a9a9c2" stroke-width="1.1" fill="none"/><text x="8" y="16" font-size="7.5" fill="#a9a9c2" stroke="#a9a9c2" stroke-width=".35" text-anchor="middle" font-family="Liberation Sans,sans-serif" textLength="16" lengthAdjust="spacingAndGlyphs">saF8</text></svg></div><div class="sep" style="left:423px"></div><div class="ic" style="left:430px;top:5px"><svg width="16" height="17" viewBox="0 0 16 17" ><path d="M8.5 0.500v8" stroke="#000" stroke-width="1" fill="none" shape-rendering="crispEdges"/><path d="M6 3l2.5-2.500L11 3" stroke="#000" stroke-width="1.1" fill="none"/><text x="8" y="16" font-size="8" fill="#000" stroke="#000" stroke-width=".35" text-anchor="middle" font-family="Liberation Sans,sans-serif" textLength="14" lengthAdjust="spacingAndGlyphs">aF5</text></svg></div><div class="ic" style="left:452px;top:5px"><svg width="16" height="17" viewBox="0 0 16 17" ><path d="M8.5 0.500v8" stroke="#000" stroke-width="1" fill="none" shape-rendering="crispEdges"/><path d="M6 6l2.5 2.500L11 6" stroke="#000" stroke-width="1.1" fill="none"/><text x="8" y="16" font-size="8" fill="#000" stroke="#000" stroke-width=".35" text-anchor="middle" font-family="Liberation Sans,sans-serif" textLength="16" lengthAdjust="spacingAndGlyphs">caF5</text></svg></div><div class="ic" style="left:474px;top:5px"><svg width="16" height="17" viewBox="0 0 16 17" ><path d="M0 4.500h16" stroke="#000" stroke-width="1" fill="none" shape-rendering="crispEdges"/><path d="M5 8L12 1.5" stroke="#000" stroke-width="1.1" fill="none"/><text x="8" y="16" font-size="8" fill="#000" stroke="#000" stroke-width=".35" text-anchor="middle" font-family="Liberation Sans,sans-serif" textLength="16" lengthAdjust="spacingAndGlyphs">caF10</text></svg></div><div class="ic" style="left:496px;top:5px"><svg width="16" height="17" viewBox="0 0 16 17" ><path d="M3.5 1.500v4h11" stroke="#000" stroke-width="1" fill="none" shape-rendering="crispEdges"/><text x="8" y="16" font-size="8" fill="#000" stroke="#000" stroke-width=".35" text-anchor="middle" font-family="Liberation Sans,sans-serif" textLength="13" lengthAdjust="spacingAndGlyphs">F10</text></svg></div><div class="ic" style="left:518px;top:5px"><svg width="16" height="17" viewBox="0 0 16 17" ><path d="M1 1.500h4M3.5 1.500v6M11 1.500h4M12 4.500h3" stroke="#000" stroke-width="1" fill="none" shape-rendering="crispEdges"/><path d="M4 0.500l9 7.500M13 0.500l-9 7.5" stroke="#e81010" stroke-width="1.4" fill="none"/><text x="8" y="16" font-size="8" fill="#000" stroke="#000" stroke-width=".35" text-anchor="middle" font-family="Liberation Sans,sans-serif" textLength="14" lengthAdjust="spacingAndGlyphs">aF9</text></svg></div><div class="sep" style="left:539px"></div><div class="ic" style="left:546px;top:5px"><svg width="16" height="17" viewBox="0 0 16 17" ><path d="M1 4v9M15 4v9M0 8.500h2M14 8.500h2" stroke="#111" stroke-width="1.2"/><rect x="2.5" y="2.5" width="11" height="12" fill="#fff" stroke="#111" stroke-width="1.2"/><text x="8" y="12" font-size="9" font-weight="bold" fill="#1a2ee8" text-anchor="middle" font-family="Liberation Sans,sans-serif" textLength="9" lengthAdjust="spacingAndGlyphs">ST</text></svg></div><div class="sep" style="left:567px"></div><div class="ic" style="left:574px;top:5px"><svg width="16" height="17" viewBox="0 0 16 17" ><path d="M1 4h4M11 4h4M5 0.500v7M11 0.500v7" stroke="#111" stroke-width="1.2"/><path d="M2 9.500h8l1.5 1.5-1.5 4.500H3L1 13z" fill="#e8e8ee" stroke="#555" stroke-width=".8"/><path d="M9 12l5-5 2.5 2.5-5 5z" fill="#36b53a" stroke="#1a6a20" stroke-width=".5"/><path d="M9 12l-1.2 3.6 3.7-1.100z" fill="#f0d080" stroke="#a08030" stroke-width=".4"/></svg></div><div class="ic" style="left:596px;top:5px"><svg width="16" height="17" viewBox="0 0 16 17" ><path d="M1 2h3M4 1.500h8l1 1.5-1 3H8L6 8V6H4zM0 13h3M3 10.500v5M6 10.500v5M6 13h3M13.5 13h2" stroke="#111" stroke-width="1" fill="#fff"/><circle cx="11.5" cy="13" r="2" fill="none" stroke="#111" stroke-width="1"/><path d="M10 6l5-5 2.5 2.5-5 5z" fill="#36b53a" stroke="#1a6a20" stroke-width=".5"/><path d="M10 6l-1.2 3.6 3.7-1.100z" fill="#f0d080" stroke="#a08030" stroke-width=".4"/></svg></div><div class="tbend" style="border-radius:0"><b class="chev">»</b></div></div>
<div id="navhdr"><div class="grip" style="left:4px;top:5px"></div><span>导航</span><svg class="abs" style="left:148px;top:8px" width="9" height="11" viewBox="0 0 9 11"><path d="M2.5 1h4M3 1v4.500M6 1v4.500M5 1v4.500M1 5.500h7M4.5 5.500V10" stroke="#000" stroke-width="1" fill="none"/></svg><svg class="abs" style="left:163px;top:9px" width="10" height="10" viewBox="0 0 10 10"><path d="M1 1l8 8M9 1l-8 8" stroke="#000" stroke-width="1.6"/></svg></div>
<div id="prjhdr">工程</div>
<div id="prjtb"><div class="ic" style="left:3px;top:5px"><svg width="16" height="16" viewBox="0 0 16 16" ><path d="M1.5 3.500h7.500l0 0v11h-9.500v-11z" fill="#fff" stroke="#444" stroke-width="1"/><path d="M11.5 0.500v7M8 4h7" stroke="#f07a10" stroke-width="2.6"/></svg></div><div class="ic" style="left:25px;top:5px"><svg width="16" height="16" viewBox="0 0 16 16" ><g opacity=".7"><path d="M2.5 3.500h4l2 2v5h-6z" fill="#ececf4" stroke="#a8a8c0" stroke-width=".9"/><path d="M7.5 6.500h4l2 2v6h-6z" fill="#ececf4" stroke="#a8a8c0" stroke-width=".9"/><path d="M9 10h3M9 12h3" stroke="#b8b8cc" stroke-width=".7"/></g></svg></div><div class="ic" style="left:47px;top:5px"><svg width="16" height="16" viewBox="0 0 16 16" ><g opacity=".75"><path d="M2.5 3.500h9v10h-9z" fill="#cfcfde" stroke="#a8a8c0"/><rect x="5" y="2" width="4" height="3" fill="#dcdce8" stroke="#a8a8c0"/><path d="M7.5 7.500h4l2 2v5h-6z" fill="#ececf4" stroke="#a8a8c0"/></g></svg></div><div class="ic" style="left:69.5px;top:5px"><svg width="16" height="16" viewBox="0 0 16 16" ><path d="M2.5 0.500h5l2 2v7h-7z" fill="#fff" stroke="#444" stroke-width=".9"/><path d="M4 3h3M4 5h4" stroke="#777" stroke-width=".7"/><circle cx="10.5" cy="10.5" r="4.5" fill="#1a6ae0" stroke="#0a3aa0" stroke-width=".6"/><rect x="9.8" y="9.5" width="1.5" height="4" fill="#fff"/><rect x="9.8" y="7.3" width="1.5" height="1.5" fill="#fff"/></svg></div><div class="ic" style="left:91px;top:5px"><svg width="16" height="16" viewBox="0 0 16 16" ><path d="M2.5 1.500h8l3 3v10h-11z" fill="#fff" stroke="#5a6a9a" stroke-width="1"/><path d="M5 8a3.2 3.2 0 0 1 5.6-1.500l1-1v3h-3l1-1A2 2 0 0 0 6.3 8zM11 9a3.2 3.2 0 0 1-5.6 1.500l-1 1v-3h3l-1 1A2 2 0 0 0 9.7 9z" fill="#18a534"/></svg></div><div class="sep" style="left:112px;top:5px;height:16px"></div><div class="ic" style="left:119px;top:5px"><svg width="16" height="16" viewBox="0 0 16 16" ><path d="M1 5l5-4v9z" fill="#555"/><rect x="6" y="1" width="6" height="14" fill="#555" stroke="#222" stroke-width=".7"/><rect x="7" y="4" width="2" height="2" fill="#e01818"/><rect x="7" y="8" width="2" height="6" fill="#e01818"/><path d="M10 4v10" stroke="#ccc"/></svg></div><div class="dd" style="left:136px;top:12px"></div></div>
<div id="tree"><div class="vl" style="left:9px;top:0px;height:371px"></div><div class="vl" style="left:28px;top:34px;height:337px"></div><div class="vl" style="left:47px;top:54px;height:317px"></div><div class="hl" style="left:14px;top:10px;width:6px"></div><div class="bx" style="left:5px;top:6px"><i class="h"></i><i class="v"></i></div><div class="ic" style="left:20px;top:2px"><svg width="16" height="16" viewBox="0 0 16 16" ><path d="M0.5 6.500h4l1 1h9.500v7.500h-14.500z" fill="#f5cc5a" stroke="#b8861c" stroke-width=".9"/><rect x="5.5" y="1.5" width="9" height="7" fill="#8ae6f4" stroke="#3a4a5a" stroke-width="1"/><path d="M5 10h10.500v2.500H5z" fill="#222"/><path d="M1 3.500l6.5 7" stroke="#2a9a3a" stroke-width="2.4"/><path d="M7 10l1.2 1.6-1.9-.4z" fill="#f0d090"/><path d="M1 13.500h13.5" stroke="#fae6a0" stroke-width="1.2"/></svg></div><span class="tl" style="left:39px;top:0px">程序设置</span><div class="hl" style="left:14px;top:30px;width:6px"></div><div class="bx" style="left:5px;top:26px"><i class="h"></i></div><div class="ic" style="left:20px;top:22px"><svg width="16" height="16" viewBox="0 0 16 16" ><circle cx="5" cy="4" r="2.6" fill="#f48ab8"/><circle cx="10" cy="3.5" r="2.6" fill="#7ad05a"/><circle cx="13" cy="5.5" r="2" fill="#5ab848"/><path d="M0.5 5.500l2-1.500h3l1 1.500h9v10h-15z" fill="#fae27a" stroke="#e0a828" stroke-width=".9" fill-opacity=".88"/><path d="M3 9.500c2-1 3 1 5 0s3-1 5 0" stroke="#f4f0c0" stroke-width="1.5" fill="none"/></svg></div><span class="tl" style="left:39px;top:20px">程序部件</span><div class="hl" style="left:33px;top:50px;width:6px"></div><div class="bx" style="left:24px;top:46px"><i class="h"></i></div><div class="ic" style="left:39px;top:42px"><svg width="16" height="16" viewBox="0 0 16 16" ><path d="M2.5 1.500h5l3 2.500v8h-8z" fill="#f4f4fa" stroke="#8a9ab8" stroke-width=".8"/><path d="M4.5 0.500h5l3.5 3v8" fill="#e4e8f2" stroke="#8a9ab8" stroke-width=".8"/><path d="M6 2.500h4l3 3v7H6z" fill="#fff" stroke="#8a9ab8" stroke-width=".8"/><path d="M0.5 6.500h4.500l1 1.500h9.500v7.500h-15z" fill="#f5cc5a" stroke="#b8861c" stroke-width=".9" fill-opacity=".92"/><path d="M2 10.500h12v3.500h-12z" fill="#fae6a0" fill-opacity=".8"/></svg></div><span class="tl" style="left:58px;top:40px">程序</span><div class="hl" style="left:52px;top:70px;width:6px"></div><div class="bx" style="left:43px;top:66px"><i class="h"></i></div><div class="ic" style="left:58px;top:62px"><svg width="16" height="16" viewBox="0 0 16 16" ><path d="M0.5 4.500h4l1 1.500h9.500v9.500h-14.500z" fill="#f5d272" stroke="#b8861c" stroke-width=".9"/><path d="M5 1.500h6l3 3v9h-9z" fill="#fff" stroke="#7d8db0" stroke-width=".9"/><path d="M11 1.500v3h3z" fill="#dfe6f2" stroke="#7d8db0" stroke-width=".7"/><path d="M5.8 8.500h2M11.2 8.500h2" stroke="#e81010" stroke-width="1.2"/><path d="M7.8 5.800v5.400M11.2 5.800v5.4" stroke="#e81010" stroke-width="1.5"/><path d="M0.5 15.500v-7l2-.5v7.500z" fill="#fae6a0" stroke="#b8861c" stroke-width=".6"/></svg></div><span class="tl" style="letter-spacing:0.411px;left:77px;top:60px">Alarm</span><div class="hl" style="left:66px;top:90px;width:12px"></div><div class="ic" style="left:77px;top:82px"><svg width="16" height="16" viewBox="0 0 16 16" ><path d="M2.5 1.500h8l3.5 3.500v10.500h-11.500z" fill="#fff" stroke="#7d8db0" stroke-width="1"/><path d="M14 5.500v10h-11.5" fill="none" stroke="#3a5a8c" stroke-width="1"/><path d="M10.5 1.500v3.500h3.500z" fill="#dfe6f2" stroke="#7d8db0" stroke-width=".8"/><path d="M3 9h2.600M9.1 9h2.5" stroke="#e81010" stroke-width="1.3"/><path d="M5.6 6.200v5.700M9.1 6.200v5.7" stroke="#e81010" stroke-width="1.6"/></svg></div><span class="tl" style="left:96px;top:80px">程序本体</span><div class="hl" style="left:66px;top:110px;width:12px"></div><div class="ic" style="left:77px;top:102px"><svg width="16" height="16" viewBox="0 0 16 16" ><path d="M2 1.500l7-1 1 8-7 1z" fill="#9cc4f0" stroke="#6a9ad8" stroke-width=".7"/><rect x="5.5" y="6.5" width="10" height="9" fill="#fff" stroke="#2a3ad8" stroke-width="1"/><path d="M5.5 9.500h10M5.5 12.500h10M9 6.500v9" stroke="#2a3ad8" stroke-width="1"/></svg></div><span class="tl" style="left:96px;top:100px">局部标签</span><div class="hl" style="left:52px;top:130px;width:6px"></div><div class="bx" style="left:43px;top:126px"><i class="h"></i></div><div class="ic" style="left:58px;top:122px"><svg width="16" height="16" viewBox="0 0 16 16" ><path d="M0.5 4.500h4l1 1.500h9.500v9.500h-14.500z" fill="#f5d272" stroke="#b8861c" stroke-width=".9"/><path d="M5 1.500h6l3 3v9h-9z" fill="#fff" stroke="#7d8db0" stroke-width=".9"/><path d="M11 1.500v3h3z" fill="#dfe6f2" stroke="#7d8db0" stroke-width=".7"/><path d="M5.8 8.500h2M11.2 8.500h2" stroke="#e81010" stroke-width="1.2"/><path d="M7.8 5.800v5.400M11.2 5.800v5.4" stroke="#e81010" stroke-width="1.5"/><path d="M0.5 15.500v-7l2-.5v7.500z" fill="#fae6a0" stroke="#b8861c" stroke-width=".6"/></svg></div><span class="tl" style="letter-spacing:0.700px;left:77px;top:120px">IN</span><div class="hl" style="left:66px;top:150px;width:12px"></div><div class="ic" style="left:77px;top:142px"><svg width="16" height="16" viewBox="0 0 16 16" ><path d="M2.5 1.500h8l3.5 3.500v10.500h-11.500z" fill="#fff" stroke="#7d8db0" stroke-width="1"/><path d="M14 5.500v10h-11.5" fill="none" stroke="#3a5a8c" stroke-width="1"/><path d="M10.5 1.500v3.500h3.500z" fill="#dfe6f2" stroke="#7d8db0" stroke-width=".8"/><path d="M3 9h2.600M9.1 9h2.5" stroke="#e81010" stroke-width="1.3"/><path d="M5.6 6.200v5.700M9.1 6.200v5.7" stroke="#e81010" stroke-width="1.6"/></svg></div><span class="tl" style="left:96px;top:140px">程序本体</span><div class="hl" style="left:66px;top:170px;width:12px"></div><div class="ic" style="left:77px;top:162px"><svg width="16" height="16" viewBox="0 0 16 16" ><path d="M2 1.500l7-1 1 8-7 1z" fill="#9cc4f0" stroke="#6a9ad8" stroke-width=".7"/><rect x="5.5" y="6.5" width="10" height="9" fill="#fff" stroke="#2a3ad8" stroke-width="1"/><path d="M5.5 9.500h10M5.5 12.500h10M9 6.500v9" stroke="#2a3ad8" stroke-width="1"/></svg></div><span class="tl" style="left:96px;top:160px">局部标签</span><div class="hl" style="left:52px;top:190px;width:6px"></div><div class="bx" style="left:43px;top:186px"><i class="h"></i></div><div class="ic" style="left:58px;top:182px"><svg width="16" height="16" viewBox="0 0 16 16" ><path d="M0.5 4.500h4l1 1.500h9.500v9.500h-14.500z" fill="#f5d272" stroke="#b8861c" stroke-width=".9"/><path d="M5 1.500h6l3 3v9h-9z" fill="#fff" stroke="#7d8db0" stroke-width=".9"/><path d="M11 1.500v3h3z" fill="#dfe6f2" stroke="#7d8db0" stroke-width=".7"/><path d="M5.8 8.500h2M11.2 8.500h2" stroke="#e81010" stroke-width="1.2"/><path d="M7.8 5.800v5.400M11.2 5.800v5.4" stroke="#e81010" stroke-width="1.5"/><path d="M0.5 15.500v-7l2-.5v7.500z" fill="#fae6a0" stroke="#b8861c" stroke-width=".6"/></svg></div><span class="tl" style="letter-spacing:-0.397px;left:77px;top:180px">LOGC1</span><div class="hl" style="left:66px;top:210px;width:12px"></div><div class="ic" style="left:77px;top:202px"><svg width="16" height="16" viewBox="0 0 16 16" ><path d="M2.5 1.500h8l3.5 3.500v10.500h-11.500z" fill="#fff" stroke="#7d8db0" stroke-width="1"/><path d="M14 5.500v10h-11.5" fill="none" stroke="#3a5a8c" stroke-width="1"/><path d="M10.5 1.500v3.500h3.500z" fill="#dfe6f2" stroke="#7d8db0" stroke-width=".8"/><path d="M3 9h2.600M9.1 9h2.5" stroke="#e81010" stroke-width="1.3"/><path d="M5.6 6.200v5.700M9.1 6.200v5.7" stroke="#e81010" stroke-width="1.6"/></svg></div><span class="tl sel" style="left:96px;top:200px">程序本体</span><div class="hl" style="left:66px;top:230px;width:12px"></div><div class="ic" style="left:77px;top:222px"><svg width="16" height="16" viewBox="0 0 16 16" ><path d="M2 1.500l7-1 1 8-7 1z" fill="#9cc4f0" stroke="#6a9ad8" stroke-width=".7"/><rect x="5.5" y="6.5" width="10" height="9" fill="#fff" stroke="#2a3ad8" stroke-width="1"/><path d="M5.5 9.500h10M5.5 12.500h10M9 6.500v9" stroke="#2a3ad8" stroke-width="1"/></svg></div><span class="tl" style="left:96px;top:220px">局部标签</span><div class="hl" style="left:52px;top:250px;width:6px"></div><div class="bx" style="left:43px;top:246px"><i class="h"></i><i class="v"></i></div><div class="ic" style="left:58px;top:242px"><svg width="16" height="16" viewBox="0 0 16 16" ><path d="M0.5 4.500h4l1 1.500h9.500v9.500h-14.500z" fill="#f5d272" stroke="#b8861c" stroke-width=".9"/><path d="M5 1.500h6l3 3v9h-9z" fill="#fff" stroke="#7d8db0" stroke-width=".9"/><path d="M11 1.500v3h3z" fill="#dfe6f2" stroke="#7d8db0" stroke-width=".7"/><path d="M5.8 8.500h2M11.2 8.500h2" stroke="#e81010" stroke-width="1.2"/><path d="M7.8 5.800v5.400M11.2 5.800v5.4" stroke="#e81010" stroke-width="1.5"/><path d="M0.5 15.500v-7l2-.5v7.500z" fill="#fae6a0" stroke="#b8861c" stroke-width=".6"/></svg></div><span class="tl" style="letter-spacing:-0.397px;left:77px;top:240px">LOGC2</span><div class="hl" style="left:52px;top:270px;width:6px"></div><div class="bx" style="left:43px;top:266px"><i class="h"></i></div><div class="ic" style="left:58px;top:262px"><svg width="16" height="16" viewBox="0 0 16 16" ><path d="M0.5 4.500h4l1 1.500h9.500v9.500h-14.500z" fill="#f5d272" stroke="#b8861c" stroke-width=".9"/><path d="M5 1.500h6l3 3v9h-9z" fill="#fff" stroke="#7d8db0" stroke-width=".9"/><path d="M11 1.500v3h3z" fill="#dfe6f2" stroke="#7d8db0" stroke-width=".7"/><path d="M5.8 8.500h2M11.2 8.500h2" stroke="#e81010" stroke-width="1.2"/><path d="M7.8 5.800v5.400M11.2 5.800v5.4" stroke="#e81010" stroke-width="1.5"/><path d="M0.5 15.500v-7l2-.5v7.500z" fill="#fae6a0" stroke="#b8861c" stroke-width=".6"/></svg></div><span class="tl" style="letter-spacing:0.750px;left:77px;top:260px">MAIN</span><div class="hl" style="left:66px;top:290px;width:12px"></div><div class="ic" style="left:77px;top:282px"><svg width="16" height="16" viewBox="0 0 16 16" ><path d="M2.5 1.500h8l3.5 3.500v10.500h-11.500z" fill="#fff" stroke="#7d8db0" stroke-width="1"/><path d="M14 5.500v10h-11.5" fill="none" stroke="#3a5a8c" stroke-width="1"/><path d="M10.5 1.500v3.500h3.500z" fill="#dfe6f2" stroke="#7d8db0" stroke-width=".8"/><path d="M3 9h2.600M9.1 9h2.5" stroke="#e81010" stroke-width="1.3"/><path d="M5.6 6.200v5.700M9.1 6.200v5.7" stroke="#e81010" stroke-width="1.6"/></svg></div><span class="tl" style="left:96px;top:280px">程序本体</span><div class="hl" style="left:66px;top:310px;width:12px"></div><div class="ic" style="left:77px;top:302px"><svg width="16" height="16" viewBox="0 0 16 16" ><path d="M2 1.500l7-1 1 8-7 1z" fill="#9cc4f0" stroke="#6a9ad8" stroke-width=".7"/><rect x="5.5" y="6.5" width="10" height="9" fill="#fff" stroke="#2a3ad8" stroke-width="1"/><path d="M5.5 9.500h10M5.5 12.500h10M9 6.500v9" stroke="#2a3ad8" stroke-width="1"/></svg></div><span class="tl" style="left:96px;top:300px">局部标签</span><div class="hl" style="left:52px;top:330px;width:6px"></div><div class="bx" style="left:43px;top:326px"><i class="h"></i></div><div class="ic" style="left:58px;top:322px"><svg width="16" height="16" viewBox="0 0 16 16" ><path d="M0.5 4.500h4l1 1.500h9.500v9.500h-14.500z" fill="#f5d272" stroke="#b8861c" stroke-width=".9"/><path d="M5 1.500h6l3 3v9h-9z" fill="#fff" stroke="#7d8db0" stroke-width=".9"/><path d="M11 1.500v3h3z" fill="#dfe6f2" stroke="#7d8db0" stroke-width=".7"/><path d="M5.8 8.500h2M11.2 8.500h2" stroke="#e81010" stroke-width="1.2"/><path d="M7.8 5.800v5.400M11.2 5.800v5.4" stroke="#e81010" stroke-width="1.5"/><path d="M0.5 15.500v-7l2-.5v7.500z" fill="#fae6a0" stroke="#b8861c" stroke-width=".6"/></svg></div><span class="tl" style="letter-spacing:0.052px;left:77px;top:320px">OUT</span><div class="hl" style="left:66px;top:350px;width:12px"></div><div class="ic" style="left:77px;top:342px"><svg width="16" height="16" viewBox="0 0 16 16" ><path d="M2.5 1.500h8l3.5 3.500v10.500h-11.500z" fill="#fff" stroke="#7d8db0" stroke-width="1"/><path d="M14 5.500v10h-11.5" fill="none" stroke="#3a5a8c" stroke-width="1"/><path d="M10.5 1.500v3.500h3.500z" fill="#dfe6f2" stroke="#7d8db0" stroke-width=".8"/><path d="M3 9h2.600M9.1 9h2.5" stroke="#e81010" stroke-width="1.3"/><path d="M5.6 6.200v5.700M9.1 6.200v5.7" stroke="#e81010" stroke-width="1.6"/></svg></div><span class="tl" style="left:96px;top:340px">程序本体</span><div class="hl" style="left:66px;top:370px;width:12px"></div><div class="ic" style="left:77px;top:362px"><svg width="16" height="16" viewBox="0 0 16 16" ><path d="M2 1.500l7-1 1 8-7 1z" fill="#9cc4f0" stroke="#6a9ad8" stroke-width=".7"/><rect x="5.5" y="6.5" width="10" height="9" fill="#fff" stroke="#2a3ad8" stroke-width="1"/><path d="M5.5 9.500h10M5.5 12.500h10M9 6.500v9" stroke="#2a3ad8" stroke-width="1"/></svg></div><span class="tl" style="left:96px;top:360px">局部标签</span><div class="vl" style="left:66px;top:79px;height:31px"></div><div class="vl" style="left:66px;top:139px;height:31px"></div><div class="vl" style="left:66px;top:199px;height:31px"></div><div class="vl" style="left:66px;top:279px;height:31px"></div><div class="vl" style="left:66px;top:339px;height:31px"></div></div>
<div id="vsb"><svg class="abs" style="left:4px;top:6px" width="9" height="6" viewBox="0 0 9 6"><path d="M0.7 5l3.8-3.800L8.3 5" fill="none" stroke="#555" stroke-width="1.5"/></svg><div class="thumb"></div><svg class="abs" style="left:4px;top:360px" width="9" height="6" viewBox="0 0 9 6"><path d="M0.7 1l3.8 3.800L8.3 1" fill="none" stroke="#555" stroke-width="1.5"/></svg></div>
<div id="hsb"><svg class="abs" style="left:7px;top:4px" width="6" height="9" viewBox="0 0 6 9"><path d="M5 0.700L1.2 4.5 5 8.3" fill="none" stroke="#555" stroke-width="1.5"/></svg><div class="thumb"></div><svg class="abs" style="left:150px;top:4px" width="6" height="9" viewBox="0 0 6 9"><path d="M1 0.700l3.8 3.800L1 8.3" fill="none" stroke="#555" stroke-width="1.5"/></svg></div>
<div id="split"><div></div></div>
<div class="nbtn act" style="top:579px"><div class="ic" style="left:5px;top:3px"><svg width="24" height="24" viewBox="0 0 24 24" ><path d="M0 15L4 13.5 4 8 15 1v14z" fill="#5a5a5e"/><path d="M4 8L15 1v11L4 13.500z" fill="#77777c" stroke="#3a3a3e" stroke-width=".6"/><rect x="9.5" y="8" width="5" height="16" fill="#e02818" stroke="#8a1008" stroke-width=".6"/><rect x="14.5" y="7" width="9" height="17" fill="#3a3a3e" stroke="#111" stroke-width=".6"/><path d="M16 10h6M16 13h6M16 16h6M16 19h6" stroke="#9a9aa0" stroke-width="1.2"/><rect x="16" y="8.5" width="2" height="2" fill="#38d048"/></svg></div><span>工程</span></div>
<div class="nbtn" style="top:611px"><div class="ic" style="left:5px;top:3px"><svg width="24" height="24" viewBox="0 0 24 24" ><path d="M1 3c4-2 8-2 11 1 3-3 6-3 10-1v14c-4-2-7-2-10 1-3-3-7-3-11-1z" fill="#f4ecd8" stroke="#8a7a5a" stroke-width=".9"/><path d="M12 4v14" stroke="#8a7a5a"/><path d="M3 6c2-.8 5-.8 7 .5M3 9c2-.8 5-.8 7 .5M3 12c2-.8 5-.8 7 .5M14 6.500c2-1.3 4-1.3 6-.5M14 9.500c2-1.3 4-1.3 6-.5" stroke="#a8a090" stroke-width=".8" fill="none"/><path d="M15 12l4-3 4 4v6l-3 2-4-3z" fill="#f5c84a" stroke="#b88a18" stroke-width=".7"/><path d="M14 24c0-4 9-4 9 0z" fill="#58b858"/></svg></div><span>用户库</span></div>
<div class="nbtn" style="top:643px"><div class="ic" style="left:5px;top:3px"><svg width="24" height="24" viewBox="0 0 24 24" ><path d="M1 5v14h9" fill="none" stroke="#18a534" stroke-width="1.6"/><rect x="3" y="1" width="15" height="12" fill="#dfe8f8" stroke="#334" stroke-width="1"/><rect x="4.5" y="2.5" width="12" height="9" fill="#22b8f0"/><path d="M2 14h14l2 3H1z" fill="#c8c8d0" stroke="#445" stroke-width=".7"/><rect x="14" y="5" width="9" height="18" fill="#2c2c30" stroke="#111" stroke-width=".6"/><path d="M15.5 8h6M15.5 11h6M15.5 14h6M15.5 19h6" stroke="#8a8a92" stroke-width="1.2"/><rect x="15.5" y="6" width="2" height="1.5" fill="#38d048"/></svg></div><span>连接目标</span></div>
<div class="nbtn" style="top:675px;height:32px"><b class="chev2">»</b><div class="dd" style="left:164px;top:19px;border-width:3px 3px 0 3px"></div></div>
<div class="abs" style="left:184px;top:106px;width:1182px;height:25px;background:linear-gradient(rgba(255,255,255,.85),rgba(255,255,255,.35))"></div>
<div class="abs" style="left:184px;top:109px;width:17px;height:22px;overflow:hidden;background:linear-gradient(#fdfdff,#f0f0f8 50%,#d9d9e8);border-top:1px solid #2452b8;border-right:1px solid #2452b8;border-radius:0 4px 0 0"><span style="position:absolute;left:-3px;top:-1px;line-height:24px;font-size:12px">T</span></div>
<svg class="abs" style="left:200px;top:109px;z-index:1" width="184" height="22" viewBox="0 0 184 22"><defs><linearGradient id="tg200" x1="0" y1="0" x2="0" y2="1"><stop offset="0" stop-color="#fdfdff"/><stop offset=".5" stop-color="#f0f0f8"/><stop offset="1" stop-color="#d9d9e8"/></linearGradient></defs><path d="M0.5 22V4.500Q0.5 0.5 4.5 0.500H179Q183.5 0.5 183.5 4.500V22z" fill="url(#tg200)" stroke="#2452b8" stroke-width="1"/></svg><div class="ic" style="left:209px;top:113px;z-index:2"><svg width="16" height="16" viewBox="0 0 16 16" ><path d="M2.5 1.500h8l3.5 3.500v10.500h-11.500z" fill="#fff" stroke="#7d8db0" stroke-width="1"/><path d="M14 5.500v10h-11.5" fill="none" stroke="#3a5a8c" stroke-width="1"/><path d="M10.5 1.500v3.500h3.500z" fill="#dfe6f2" stroke="#7d8db0" stroke-width=".8"/><path d="M3 9h2.600M9.1 9h2.5" stroke="#e81010" stroke-width="1.3"/><path d="M5.6 6.200v5.700M9.1 6.200v5.7" stroke="#e81010" stroke-width="1.6"/></svg></div><span class="tt" style="letter-spacing:0.056px;left:228.5px;z-index:2">[PRG]R 写入 START 481步</span>
<svg class="abs" style="left:599px;top:109px;z-index:1" width="166" height="22" viewBox="0 0 166 22"><defs><linearGradient id="tg599" x1="0" y1="0" x2="0" y2="1"><stop offset="0" stop-color="#fdfdff"/><stop offset=".5" stop-color="#f0f0f8"/><stop offset="1" stop-color="#d9d9e8"/></linearGradient></defs><path d="M0.5 22V4.500Q0.5 0.5 4.5 0.500H161Q165.5 0.5 165.5 4.500V22z" fill="url(#tg599)" stroke="#2452b8" stroke-width="1"/></svg><div class="ic" style="left:607px;top:113px;z-index:2"><svg width="16" height="16" viewBox="0 0 16 16" ><path d="M2.5 1.500h8l3.5 3.500v10.500h-11.500z" fill="#fff" stroke="#7d8db0" stroke-width="1"/><path d="M14 5.500v10h-11.5" fill="none" stroke="#3a5a8c" stroke-width="1"/><path d="M10.5 1.500v3.500h3.500z" fill="#dfe6f2" stroke="#7d8db0" stroke-width=".8"/><path d="M3 9h2.600M9.1 9h2.5" stroke="#e81010" stroke-width="1.3"/><path d="M5.6 6.200v5.700M9.1 6.200v5.7" stroke="#e81010" stroke-width="1.6"/></svg></div><span class="tt" style="letter-spacing:0.170px;left:626.5px;z-index:2">[PRG]R 写入 IN 1490步</span>
<svg class="abs" style="left:764px;top:109px;z-index:1" width="187" height="22" viewBox="0 0 187 22"><defs><linearGradient id="tg764" x1="0" y1="0" x2="0" y2="1"><stop offset="0" stop-color="#fdfdff"/><stop offset=".5" stop-color="#f0f0f8"/><stop offset="1" stop-color="#d9d9e8"/></linearGradient></defs><path d="M0.5 22V4.500Q0.5 0.5 4.5 0.500H182Q186.5 0.5 186.5 4.500V22z" fill="url(#tg764)" stroke="#2452b8" stroke-width="1"/></svg><div class="ic" style="left:773px;top:113px;z-index:2"><svg width="16" height="16" viewBox="0 0 16 16" ><path d="M2.5 1.500h8l3.5 3.500v10.500h-11.500z" fill="#fff" stroke="#7d8db0" stroke-width="1"/><path d="M14 5.500v10h-11.5" fill="none" stroke="#3a5a8c" stroke-width="1"/><path d="M10.5 1.500v3.500h3.500z" fill="#dfe6f2" stroke="#7d8db0" stroke-width=".8"/><path d="M3 9h2.600M9.1 9h2.5" stroke="#e81010" stroke-width="1.3"/><path d="M5.6 6.200v5.700M9.1 6.200v5.7" stroke="#e81010" stroke-width="1.6"/></svg></div><span class="tt" style="letter-spacing:0.248px;left:792.7px;z-index:2">[PRG]R 写入 MAIN 1221步</span>
<svg class="abs" style="left:950px;top:109px;z-index:1" width="187" height="22" viewBox="0 0 187 22"><defs><linearGradient id="tg950" x1="0" y1="0" x2="0" y2="1"><stop offset="0" stop-color="#fdfdff"/><stop offset=".5" stop-color="#f0f0f8"/><stop offset="1" stop-color="#d9d9e8"/></linearGradient></defs><path d="M0.5 22V4.500Q0.5 0.5 4.5 0.500H182Q186.5 0.5 186.5 4.500V22z" fill="url(#tg950)" stroke="#2452b8" stroke-width="1"/></svg><div class="ic" style="left:959px;top:113px;z-index:2"><svg width="16" height="16" viewBox="0 0 16 16" ><path d="M2.5 1.500h8l3.5 3.500v10.500h-11.500z" fill="#fff" stroke="#7d8db0" stroke-width="1"/><path d="M14 5.500v10h-11.5" fill="none" stroke="#3a5a8c" stroke-width="1"/><path d="M10.5 1.500v3.500h3.500z" fill="#dfe6f2" stroke="#7d8db0" stroke-width=".8"/><path d="M3 9h2.600M9.1 9h2.5" stroke="#e81010" stroke-width="1.3"/><path d="M5.6 6.200v5.700M9.1 6.200v5.7" stroke="#e81010" stroke-width="1.6"/></svg></div><span class="tt" style="letter-spacing:0.263px;left:978px;z-index:2">[PRG]R 写入 Alarm 1164步</span>
<svg class="abs" style="left:1136px;top:109px;z-index:1" width="177" height="22" viewBox="0 0 177 22"><defs><linearGradient id="tg1136" x1="0" y1="0" x2="0" y2="1"><stop offset="0" stop-color="#fdfdff"/><stop offset=".5" stop-color="#f0f0f8"/><stop offset="1" stop-color="#d9d9e8"/></linearGradient></defs><path d="M0.5 22V4.500Q0.5 0.5 4.5 0.500H172Q176.5 0.5 176.5 4.500V22z" fill="url(#tg1136)" stroke="#2452b8" stroke-width="1"/></svg><div class="ic" style="left:1145px;top:113px;z-index:2"><svg width="16" height="16" viewBox="0 0 16 16" ><path d="M2.5 1.500h8l3.5 3.500v10.500h-11.500z" fill="#fff" stroke="#7d8db0" stroke-width="1"/><path d="M14 5.500v10h-11.5" fill="none" stroke="#3a5a8c" stroke-width="1"/><path d="M10.5 1.500v3.500h3.500z" fill="#dfe6f2" stroke="#7d8db0" stroke-width=".8"/><path d="M3 9h2.600M9.1 9h2.5" stroke="#e81010" stroke-width="1.3"/><path d="M5.6 6.200v5.700M9.1 6.200v5.7" stroke="#e81010" stroke-width="1.6"/></svg></div><span class="tt" style="letter-spacing:0.123px;left:1164px;z-index:2">[PRG]R 写入 OUT 1341步</span>
<svg class="abs" style="left:365px;top:108px;z-index:3" width="234" height="25" viewBox="0 0 234 25"><defs><linearGradient id="ag" x1="0" y1="0" x2="0" y2="1"><stop offset="0" stop-color="#fff"/><stop offset=".12" stop-color="#fff6e8"/><stop offset=".5" stop-color="#fddcaa"/><stop offset="1" stop-color="#fcc070"/></linearGradient></defs><path d="M0 25 L0 23.5 L18 4.5 Q20.5 1.5 25 1.5 H229 Q233.5 1.5 233.5 5.5 V25z" fill="url(#ag)"/><path d="M0 23.5 L18 4.5 Q20.5 1.5 25 1.5 H229 Q233.5 1.5 233.5 5.5 V23.5" fill="none" stroke="#2c58b0" stroke-width="1"/><path d="M20 3.500Q22 0.5 25 0.500H229" fill="none" stroke="#fff" stroke-width="1"/></svg><div class="ic" style="left:391px;top:113px;z-index:4"><svg width="16" height="16" viewBox="0 0 16 16" ><path d="M2.5 1.500h8l3.5 3.500v10.500h-11.500z" fill="#fff" stroke="#7d8db0" stroke-width="1"/><path d="M14 5.500v10h-11.5" fill="none" stroke="#3a5a8c" stroke-width="1"/><path d="M10.5 1.500v3.500h3.500z" fill="#dfe6f2" stroke="#7d8db0" stroke-width=".8"/><path d="M3 9h2.600M9.1 9h2.5" stroke="#e81010" stroke-width="1.3"/><path d="M5.6 6.200v5.700M9.1 6.200v5.7" stroke="#e81010" stroke-width="1.6"/></svg></div><span class="tt b" style="letter-spacing:0.157px;left:410px;z-index:4">[PRG]R 写入 LOGC1 5909步</span>
<div class="abs" style="left:578px;top:112px;width:17px;height:16px;background:#fffdf3;border:1px solid #ddd5bd;border-right-color:#c4bc9e;border-bottom-color:#c4bc9e;z-index:5"><svg class="abs" style="left:3px;top:3px" width="9" height="9" viewBox="0 0 9 9"><path d="M0.8 0.800l7.4 7.400M8.2 0.800l-7.4 7.4" stroke="#a3937b" stroke-width="2"/></svg></div>
<svg class="abs" style="left:1318px;top:112px" width="46" height="14" viewBox="0 0 46 14"><path d="M7 2v9L2 6.500z" fill="#000"/><path d="M19.5 2.500v8l4.5-4z" fill="none" stroke="#000" stroke-width="1"/><rect x="33" y="3" width="9" height="2" fill="#000"/><path d="M33 7h9l-4.5 4.500z" fill="#000"/></svg>
<div id="edframe"></div><div class="abs" style="left:188px;top:704px;width:1175px;height:1px;background:#e6e6e6"></div>
<svg class="abs" style="left:0;top:0" width="1366" height="768" viewBox="0 0 1366 768" shape-rendering="crispEdges"><rect x="292" y="135" width="1" height="569" fill="#000"/><rect x="1194" y="135" width="1" height="569" fill="#000"/><rect x="293" y="161" width="26" height="1" fill="#000"/><rect x="329" y="161" width="218" height="1" fill="#000"/><rect x="319" y="153" width="1" height="16" fill="#000"/><rect x="328" y="153" width="1" height="16" fill="#000"/><rect x="546" y="135" width="1" height="26" fill="#000"/><text x="316.3" y="148" class="dv" text-anchor="start" textLength="14.9" lengthAdjust="spacingAndGlyphs">M8</text><text x="296.3" y="180.5" class="cm" text-anchor="start" textLength="39.5" lengthAdjust="spacing">第一次复</text><text x="296.3" y="196" class="cm" text-anchor="start">位</text><rect x="293" y="279" width="26" height="1" fill="#000"/><rect x="329" y="279" width="54" height="1" fill="#000"/><rect x="393" y="279" width="53" height="1" fill="#000"/><rect x="456" y="279" width="665" height="1" fill="#000"/><rect x="319" y="271" width="1" height="16" fill="#000"/><rect x="328" y="271" width="1" height="16" fill="#000"/><rect x="383" y="271" width="1" height="16" fill="#000"/><rect x="392" y="271" width="1" height="16" fill="#000"/><rect x="446" y="271" width="1" height="16" fill="#000"/><rect x="455" y="271" width="1" height="16" fill="#000"/><text x="311.2" y="266" class="dv" text-anchor="start" textLength="24.8" lengthAdjust="spacingAndGlyphs">X165</text><text x="375.7" y="266" class="dv" text-anchor="start" textLength="23.1" lengthAdjust="spacingAndGlyphs">T151</text><text x="420.6" y="267" class="lb" text-anchor="start" textLength="143.9" lengthAdjust="spacing">固定板抓取前后伺服待机位</text><text x="296.4" y="298.5" class="cm" text-anchor="start" textLength="47.0" lengthAdjust="spacing">ST5固定板</text><text x="296.4" y="314.5" class="cm" text-anchor="start" textLength="38.6" lengthAdjust="spacing">滑台上下</text><text x="296.4" y="330.5" class="cm" text-anchor="start" textLength="29.3" lengthAdjust="spacing">缸原点</text><text x="360.6" y="298.5" class="cm" text-anchor="start" textLength="39.4" lengthAdjust="spacing">ST5 固定</text><text x="360.6" y="314.5" class="cm" text-anchor="start" textLength="38.8" lengthAdjust="spacing">板抓取夹</text><text x="360.6" y="330.5" class="cm" text-anchor="start" textLength="29.1" lengthAdjust="spacing">爪原点</text><path d="M1124 272.5Q1120.5 276 1120.5 279.5Q1120.5 283 1124 286.5M1189 272.5Q1192.5 276 1192.5 279.5Q1192.5 283 1189 286.5" stroke="#000" stroke-width="1.1" fill="none" shape-rendering="auto"/><rect x="1193" y="279" width="1" height="1" fill="#000"/><text x="1125.6" y="283" class="lb" text-anchor="start" textLength="36.8" lengthAdjust="spacing">条件27</text><text x="251.2" y="282" class="st" text-anchor="start" textLength="35.6" lengthAdjust="spacingAndGlyphs">(  1638)</text><rect x="992" y="254" width="61" height="115" fill="none" stroke="#0000a8" stroke-width="2"/><rect x="293" y="396" width="26" height="1" fill="#000"/><rect x="329" y="396" width="54" height="1" fill="#000"/><rect x="393" y="396" width="244" height="1" fill="#000"/><rect x="647" y="396" width="53" height="1" fill="#000"/><rect x="710" y="396" width="220" height="1" fill="#000"/><rect x="319" y="388" width="1" height="16" fill="#000"/><rect x="328" y="388" width="1" height="16" fill="#000"/><rect x="383" y="388" width="1" height="16" fill="#000"/><rect x="392" y="388" width="1" height="16" fill="#000"/><rect x="637" y="388" width="1" height="16" fill="#000"/><rect x="646" y="388" width="1" height="16" fill="#000"/><rect x="700" y="388" width="1" height="16" fill="#000"/><rect x="709" y="388" width="1" height="16" fill="#000"/><path d="M695.8 404.6L713.8 389.2" stroke="#000" stroke-width="1.1" fill="none" shape-rendering="auto"/><text x="316.4" y="383" class="dv" text-anchor="start" textLength="14.6" lengthAdjust="spacingAndGlyphs">M2</text><text x="357.6" y="384" class="lb" text-anchor="start" textLength="159.7" lengthAdjust="spacing">固定板抓取前后伺服待机位ON</text><text x="622.9" y="384" class="lb" text-anchor="start" textLength="36.1" lengthAdjust="spacing">条件27</text><text x="674.8" y="384" class="lb" text-anchor="start" textLength="107.4" lengthAdjust="spacing">固定板抓取流程结束</text><text x="296.4" y="415.5" class="cm" text-anchor="start" textLength="19.4" lengthAdjust="spacing">运行</text><path d="M933 389.5Q929.5 393 929.5 396.5Q929.5 400 933 403.5M1189 389.5Q1192.5 393 1192.5 396.5Q1192.5 400 1189 403.5" stroke="#000" stroke-width="1.1" fill="none" shape-rendering="auto"/><rect x="1193" y="396" width="1" height="1" fill="#000"/><text x="936" y="400" class="lb" text-anchor="start" textLength="163.5" lengthAdjust="spacing">固定板抓取前后伺服待机位OFF</text><text x="251.2" y="399" class="st" text-anchor="start" textLength="35.6" lengthAdjust="spacingAndGlyphs">(  1642)</text><rect x="356" y="396" width="1" height="119" fill="#000"/><rect x="673" y="396" width="1" height="236" fill="#000"/><rect x="293" y="514" width="26" height="1" fill="#000"/><rect x="329" y="514" width="27" height="1" fill="#000"/><rect x="319" y="506" width="1" height="16" fill="#000"/><rect x="328" y="506" width="1" height="16" fill="#000"/><text x="307.5" y="501" class="dv" text-anchor="start" textLength="32.4" lengthAdjust="spacingAndGlyphs">M1608</text><text x="296.7" y="533.5" class="cm" text-anchor="start" textLength="38.8" lengthAdjust="spacing">固定板抓</text><text x="296.7" y="549.5" class="cm" text-anchor="start" textLength="44.8" lengthAdjust="spacing">取联动HM</text><text x="296.7" y="565" class="cm" text-anchor="start">I</text><rect x="293" y="631" width="26" height="1" fill="#000"/><rect x="329" y="631" width="344" height="1" fill="#000"/><rect x="319" y="623" width="1" height="16" fill="#000"/><rect x="328" y="623" width="1" height="16" fill="#000"/><text x="293.9" y="619" class="lb" text-anchor="start" textLength="163.4" lengthAdjust="spacing">固定板抓取前后伺服待机位OFF</text></svg>
<div id="evsb"><svg class="abs" style="left:3px;top:6px" width="9" height="6" viewBox="0 0 9 6"><path d="M0.7 5l3.8-3.800L8.3 5" fill="none" stroke="#555" stroke-width="1.5"/></svg><div class="thumb"></div><svg class="abs" style="left:3px;top:557px" width="9" height="6" viewBox="0 0 9 6"><path d="M0.7 1l3.8 3.800L8.3 1" fill="none" stroke="#555" stroke-width="1.5"/></svg></div>
<div id="status">
<i style="left:317px"></i><span style="left:322px">简体中文</span>
<i style="left:415px"></i><span style="left:420px">简单</span>
<i style="left:503px"></i>
<i style="left:751px"></i><span style="letter-spacing:-0.096px;left:756.8px">FX3U/FX3UC</span>
<i style="left:859px"></i><span style="left:864px">本站</span>
<i style="left:1067px"></i><span style="letter-spacing:0.258px;left:1072.7px">(1641/2916步)</span>
<i style="left:1235px"></i><span style="left:1240.5px">改写</span>
<i style="left:1293px"></i><span style="left:1298.5px;color:#a8a8a8">大写</span>
<i style="left:1329px"></i><span style="left:1334px;color:#a8a8a8">数字</span>
</div>
<div id="taskbar">
<svg class="abs" style="left:16px;top:12px" width="16" height="16" viewBox="0 0 16 16"><path d="M0 2.300l6.5-.9v6.100H0zM7.3 1.300L16 0v7.500H7.300zM0 8.300h6.500v6.200L0 13.600zM7.3 8.300H16V16l-8.7-1.200z" fill="#fff"/></svg>
<svg class="abs" style="left:63.5px;top:9.500px" width="21" height="21" viewBox="0 0 21 21"><circle cx="6.2" cy="6.2" r="5.9" fill="#fff"/><circle cx="14.8" cy="6.2" r="5.9" fill="#fff"/><circle cx="14.8" cy="14.8" r="5.9" fill="#fff"/><circle cx="6.2" cy="14.8" r="5.9" fill="#fff"/><path d="M10.50 10.24A5.9 5.9 0 0 1 10.50 2.16" fill="none" stroke="#0f4a69" stroke-width=".9"/><path d="M10.76 10.50A5.9 5.9 0 0 1 18.84 10.50" fill="none" stroke="#0f4a69" stroke-width=".9"/><path d="M10.50 10.76A5.9 5.9 0 0 1 10.50 18.84" fill="none" stroke="#0f4a69" stroke-width=".9"/><path d="M10.24 10.50A5.9 5.9 0 0 1 2.16 10.50" fill="none" stroke="#0f4a69" stroke-width=".9"/></svg>
<svg class="abs" style="left:118px;top:9px" width="22" height="22" viewBox="0 0 22 22"><path d="M1.5 10C2.5 4 7 1 11.5 1c5.5 0 9 4 9 9.500v2H7.500c.3 3 3 4.5 6 4.5 2.5 0 4.5-.7 6-1.600v4.300c-2 1-4.5 1.5-7 1.500C6.5 21.2 3 17.5 3 13c0-3 1.5-5.5 4-7-1 1-1.6 2.3-1.8 3.500h9c0-2.6-1.5-4.3-4.2-4.300C6.5 5.2 3.5 7 1.5 10z" fill="#1a8ae8"/></svg>
<svg class="abs" style="left:166px;top:10px" width="22" height="20" viewBox="0 0 22 20"><path d="M1 1h7l1.5 2H21v4H1z" fill="#e8b830"/><rect x="1" y="5" width="20" height="14" fill="#f8d458"/><rect x="4" y="11" width="14" height="8" fill="#3a8ae0"/><rect x="7" y="14" width="8" height="5" fill="#f8d458"/></svg>
<svg class="abs" style="left:215px;top:8px" width="22" height="24" viewBox="0 0 22 24"><path d="M7 7V5a4 4 0 0 1 8 0v2" fill="none" stroke="#fff" stroke-width="1.3"/><rect x="1" y="7" width="20" height="16" fill="#fff"/><rect x="6" y="10" width="4.5" height="4.5" fill="#f25022"/><rect x="11.5" y="10" width="4.5" height="4.5" fill="#7fba00"/><rect x="6" y="15.5" width="4.5" height="4.5" fill="#00a4ef"/><rect x="11.5" y="15.5" width="4.5" height="4.5" fill="#ffb900"/></svg>
<div class="abs" style="left:252px;top:0;width:48px;height:40px;background:#0b63a5"></div><div class="abs" style="left:252px;top:38px;width:48px;height:2px;background:#8ac4f0"></div><div class="abs" style="left:109px;top:38px;width:40px;height:2px;background:#8ac4f0"></div>
<svg class="abs" style="left:264px;top:8px" width="24" height="24" viewBox="0 0 24 24"><rect width="24" height="24" rx="1.5" fill="#f80808"/><path d="M0.5 0.500H17L5 23.500H0.500z" fill="#ff6868"/><rect x=".5" y=".5" width="23" height="23" rx="1.5" fill="none" stroke="#c80000" stroke-width="1"/><path d="M2.2 8H12.700M12.7 5.200v5.700M16.5 5.200v5.700M16.5 8h4.400M7.8 8v8.500h4.900M12.7 13.700v5.600M16.5 13.700v5.600M16.5 16.500h4.4" stroke="#fff" stroke-width="1.7" fill="none"/></svg>
<svg class="abs" style="left:1041px;top:12px" width="16" height="16" viewBox="0 0 16 16"><path d="M2 1h12l2 2-1.5 11-2 2H2l-2-2L1.5 3z" fill="#f0561a"/><path d="M12 4.500C9 3 5 3.5 5 6s6 1.5 6 4.500S6 13 3.5 11.5" fill="none" stroke="#fff" stroke-width="2.2"/></svg>
<svg class="abs" style="left:1065px;top:12px" width="16" height="16" viewBox="0 0 16 16"><circle cx="8" cy="8" r="7.5" fill="#e8d020"/><circle cx="8" cy="8" r="5" fill="#28a030"/><path d="M8 4.500v7M4.5 8h7" stroke="#fff" stroke-width="2"/></svg>
<svg class="abs" style="left:1089px;top:12px" width="16" height="16" viewBox="0 0 16 16"><rect width="16" height="16" rx="2" fill="#2a9ae8"/><rect x="2" y="2" width="12" height="8" fill="#d8ecfa"/><path d="M3 4h6M3 6h8M3 8h5" stroke="#2a6ab8" stroke-width=".9"/><rect x="9" y="7" width="5" height="7" fill="#f0f6fc" stroke="#2a6ab8" stroke-width=".6"/><path d="M2 12.500h6" stroke="#fff"/></svg>
<svg class="abs" style="left:1113px;top:13px" width="18" height="14" viewBox="0 0 18 14"><path d="M3 0v4M1.5 1.500v3h3v-3" stroke="#fff" fill="none" stroke-width="1"/><rect x="3.5" y="4.5" width="12" height="7" fill="none" stroke="#fff" stroke-width="1"/><rect x="5" y="6" width="9" height="4" fill="#fff"/><rect x="16" y="6.5" width="1.5" height="3" fill="#fff"/></svg>
<svg class="abs" style="left:1139px;top:12px" width="16" height="16" viewBox="0 0 16 16"><g fill="none" stroke="#fff" stroke-width="1.1"><path d="M1.5 14.500A13 13 0 0 1 14.5 1.5" opacity=".55"/><path d="M4.5 14.500A10 10 0 0 1 14.5 4.5"/><path d="M7.5 14.500A7 7 0 0 1 14.5 7.5"/><path d="M10.5 14.500A4 4 0 0 1 14.5 10.5"/></g><circle cx="13.5" cy="13.5" r="1.3" fill="#fff"/></svg>
<svg class="abs" style="left:1161px;top:12px" width="18" height="16" viewBox="0 0 18 16"><path d="M1 5.500h3l4-3.500v12l-4-3.500H1z" fill="none" stroke="#fff" stroke-width="1.1"/><path d="M10.5 5.500q1.8 2.5 0 5M12.8 3.800q3 4.2 0 8.400M15 2q4.2 6 0 12" fill="none" stroke="#fff" stroke-width="1"/></svg>
<span class="abs" style="left:1186px;top:10px;color:#dde2ea;font-size:13.5px;font-weight:500;line-height:20px">英</span>
<svg class="abs" style="left:1214px;top:12px" width="16" height="16" viewBox="0 0 16 16"><path d="M2 1h12l2 2-1.5 11-2 2H2l-2-2L1.5 3z" fill="#f0561a"/><path d="M12 4.500C9 3 5 3.5 5 6s6 1.5 6 4.500S6 13 3.5 11.5" fill="none" stroke="#fff" stroke-width="2.2"/></svg>
<span class="abs" style="letter-spacing:-0.596px;left:1262.5px;top:2px;color:#fff;font-size:12.5px;line-height:18px;white-space:nowrap">18:01</span><span class="abs" style="letter-spacing:0.346px;left:1247px;top:20px;color:#fff;font-size:12.5px;line-height:18px;white-space:nowrap">2020/8/11</span>
<svg class="abs" style="left:1325px;top:11px" width="18" height="18" viewBox="0 0 18 18"><path d="M1.5 1.500h15v11h-9l-3 3.500v-3.500h-3z" fill="none" stroke="#fff" stroke-width="1.2"/></svg>
</div>
</body>
</html>
